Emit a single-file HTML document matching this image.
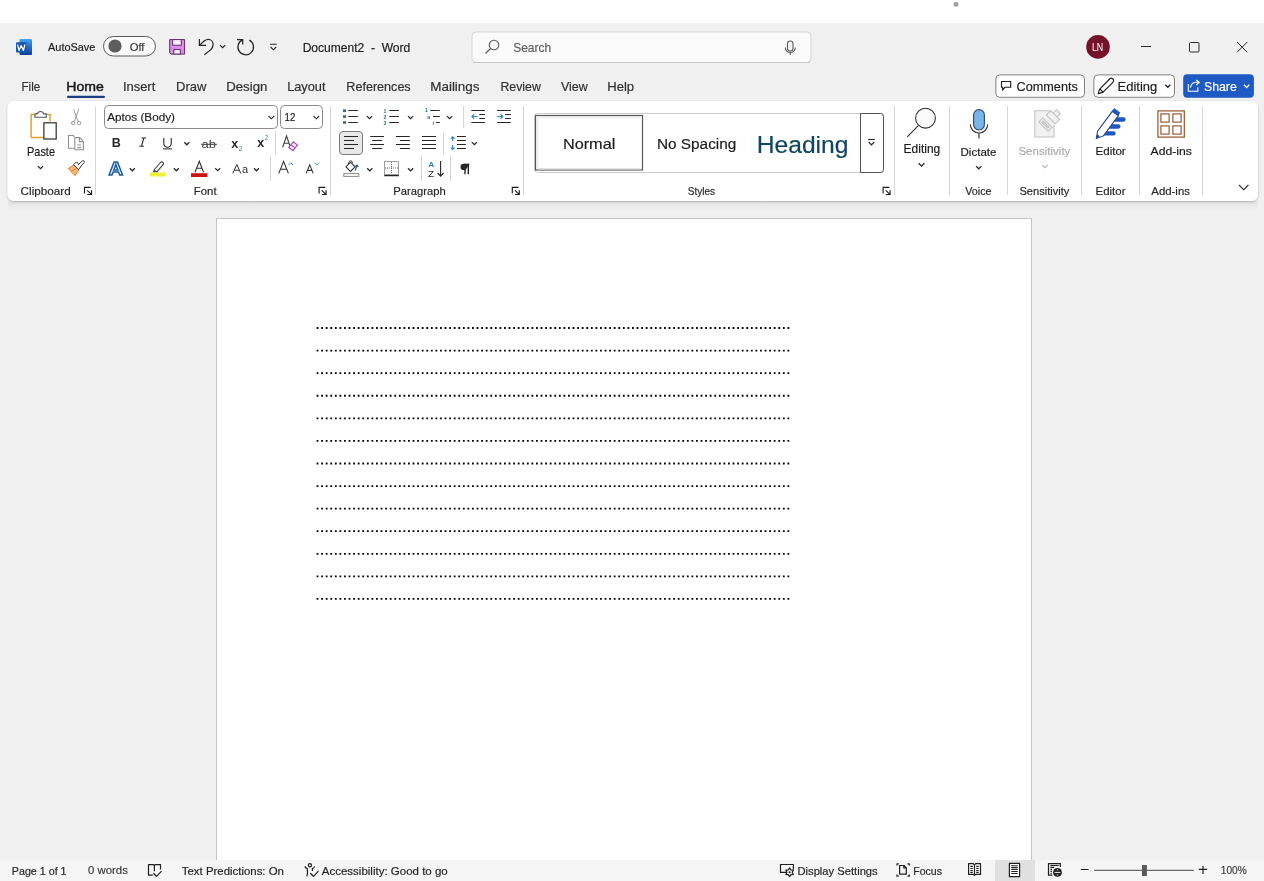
<!DOCTYPE html>
<html><head><meta charset="utf-8"><style>
html,body{margin:0;padding:0;background:#f0f0f0;overflow:hidden}
svg{display:block;font-family:"Liberation Sans", sans-serif;will-change:transform}
</style></head><body>
<svg width="1264" height="881" viewBox="0 0 1264 881">
<defs>
  <filter id="rshadow" x="-5%" y="-20%" width="110%" height="150%">
    <feGaussianBlur in="SourceAlpha" stdDeviation="1"/>
    <feOffset dy="1" result="b"/>
    <feComponentTransfer><feFuncA type="linear" slope="0.25"/></feComponentTransfer>
    <feMerge><feMergeNode/><feMergeNode in="SourceGraphic"/></feMerge>
  </filter>
</defs>
<!-- backgrounds -->
<rect x="0" y="0" width="1264" height="23" fill="#ffffff"/>
<circle cx="956" cy="4.2" r="2.5" fill="#a0a0a0"/>
<rect x="0" y="23" width="1264" height="837" fill="#f0f0f0"/>
<rect x="0" y="20" width="1264" height="1.5" fill="#fbfbfb"/>
<!-- ribbon card -->
<defs><linearGradient id="shg" x1="0" y1="0" x2="0" y2="1"><stop offset="0" stop-color="#000" stop-opacity="0.05"/><stop offset="1" stop-color="#000" stop-opacity="0"/></linearGradient></defs>
<rect x="8" y="201" width="1250" height="10" fill="url(#shg)"/>
<rect x="7.5" y="101" width="1250.5" height="100" rx="6.5" fill="#ffffff" filter="url(#rshadow)"/>
<!-- page -->
<rect x="216.5" y="218.5" width="815" height="700" fill="#ffffff" stroke="#c4c4c4" stroke-width="1"/>
<!-- status bar -->
<rect x="0" y="860" width="1264" height="21" fill="#f5f5f5"/>
<rect x="995" y="860" width="40" height="21" fill="#e0e0e0"/>

<!-- word logo -->
<defs><linearGradient id="wg" x1="0" y1="0" x2="0" y2="1">
<stop offset="0" stop-color="#41a5ee"/><stop offset="0.35" stop-color="#2b7cd3"/><stop offset="0.7" stop-color="#185abd"/><stop offset="1" stop-color="#103f91"/></linearGradient></defs>
<rect x="19.5" y="39" width="12.5" height="16" rx="1" fill="url(#wg)"/>
<rect x="16" y="42.2" width="10.4" height="10.4" rx="1" fill="#1a56b0"/>
<path d="M17.5 44.5 L19 50.4 L21.2 45.6 L23.4 50.4 L24.9 44.5" stroke="#ffffff" stroke-width="1.25" fill="none" stroke-linejoin="round"/>

<!-- autosave toggle -->
<rect x="103.5" y="36.5" width="52" height="19.5" rx="9.75" fill="#fafafa" stroke="#5a5a5a" stroke-width="1"/>
<circle cx="115" cy="46" r="6.6" fill="#5e5e5e"/>

<!-- save icon -->
<path d="M169.7 39.6 H184.6 V54.1 H171.2 L169.7 52.6 Z" fill="#dc8ce4" stroke="#5e2a66" stroke-width="1"/>
<rect x="172.7" y="39.6" width="8.6" height="5.6" fill="#fdf2fe" stroke="#5e2a66" stroke-width="1"/>
<rect x="173.8" y="49.6" width="6.5" height="4.5" fill="#fdf2fe" stroke="#5e2a66" stroke-width="1"/>

<!-- undo -->
<path d="M199.4 39 V45.4 H206" stroke="#262626" stroke-width="1.25" fill="none"/>
<path d="M199.6 45.2 C203 41.5 205.5 39.4 208.2 39.4 C211 39.4 213.1 41.6 213.1 44.5 C213.1 46.8 212.2 48.3 210.6 49.9 L204.3 54.8" stroke="#262626" stroke-width="1.25" fill="none"/>
<path d="M219.9 45.1 l2.7 2.6 l2.6 -2.6" stroke="#262626" stroke-width="1.3" fill="none"/>
<!-- redo -->
<path d="M237 39.6 H242.7 V44.6" stroke="#262626" stroke-width="1.25" fill="none"/>
<path d="M242.4 39.9 A7.8 7.8 0 1 0 249.4 40.1" stroke="#262626" stroke-width="1.25" fill="none"/>
<!-- customize -->
<path d="M270 44.3 h6.8 M270.6 47 l2.8 2.8 l2.8 -2.8" stroke="#262626" stroke-width="1.1" fill="none"/>

<!-- search box -->
<rect x="472" y="32" width="339" height="30.5" rx="4" fill="#fafafa" stroke="#d4d4d4" stroke-width="1"/>
<path d="M473 62.5 h337" stroke="#c8c8c8" stroke-width="1"/>
<circle cx="494" cy="45" r="4.8" fill="none" stroke="#5a5a5a" stroke-width="1.1"/>
<path d="M490.5 48.5 L485.5 53.5" stroke="#5a5a5a" stroke-width="1.1"/>
<!-- mic -->
<rect x="787.5" y="41" width="5.5" height="10" rx="2.75" fill="none" stroke="#5a5a5a" stroke-width="1.1"/>
<path d="M785.3 47.5 A5 5 0 0 0 795.3 47.5 M790.3 52.5 v2.5" fill="none" stroke="#5a5a5a" stroke-width="1.1"/>

<!-- avatar -->
<circle cx="1098" cy="46.9" r="11.8" fill="#761227"/>
<text x="1091.9" y="50.9" font-size="10.5" fill="#ffffff" textLength="11.4" lengthAdjust="spacingAndGlyphs">LN</text>
<!-- window controls -->
<path d="M1141 46.5 h10" stroke="#2b2b2b" stroke-width="1"/>
<rect x="1189.5" y="42.5" width="9.5" height="9.5" rx="1" fill="none" stroke="#2b2b2b" stroke-width="1"/>
<path d="M1237 42 L1247.3 52.3 M1247.3 42 L1237 52.3" stroke="#2b2b2b" stroke-width="1"/>

<!-- tab underline -->
<rect x="67" y="95.8" width="38" height="2.3" rx="1.1" fill="#1c3d80"/>

<!-- comments/editing/share buttons -->
<rect x="995.9" y="74.9" width="88.6" height="22.4" rx="4" fill="#ffffff" stroke="#808080" stroke-width="1"/>
<path d="M1001.5 81.5 H1010.7 V87.2 H1005 L1002.6 90.2 V87.2 H1001.5 Z" fill="none" stroke="#1e1e1e" stroke-width="1.15" stroke-linejoin="round"/>
<rect x="1093.9" y="74.9" width="80.6" height="22.4" rx="4" fill="#ffffff" stroke="#808080" stroke-width="1"/>
<path d="M1098.2 93.6 L1099.5 89.3 L1109.6 79 a2.3 2.3 0 0 1 3.3 3.3 L1102.8 92.4 Z M1099.9 89 L1103 92.1" fill="none" stroke="#1e1e1e" stroke-width="1.15" stroke-linejoin="round"/>
<path d="M1165.3 84.8 l2.5 2.5 l2.5 -2.5" fill="none" stroke="#1e1e1e" stroke-width="1.3"/>
<rect x="1183.2" y="74.2" width="70.7" height="23.6" rx="4" fill="#1d5ac4"/>
<path d="M1188.3 84.1 V91.3 H1197.8 V87.3" fill="none" stroke="#ffffff" stroke-width="1.1"/>
<path d="M1190.5 87.6 C1191 84 1193 82.3 1196.5 82.3 H1198.8 M1196.2 80 L1199.4 82.4 L1196.2 85" fill="none" stroke="#ffffff" stroke-width="1.1" stroke-linejoin="round"/>
<path d="M1243.9 84.8 l2.7 2.7 l2.7 -2.7" fill="none" stroke="#ffffff" stroke-width="1.3"/>

<!-- ribbon separators -->
<g stroke="#d6d6d6" stroke-width="1">
<path d="M95.5 107 v88"/>
<path d="M330.5 106 v89"/>
<path d="M523.5 106 v89"/>
<path d="M894.5 106 v89"/>
<path d="M949.5 106 v89"/>
<path d="M1007.5 106 v89"/>
<path d="M1081.5 106 v89"/>
<path d="M1139.5 106 v89"/>
<path d="M1202.5 106 v89"/>
<path d="M275.5 131 v24"/>
<path d="M270.5 156 v25"/>
<path d="M463.5 106 v22"/>
<path d="M443.5 132 v23"/>
<path d="M421.5 156 v25"/>
<path d="M450.5 156 v25"/>
</g>

<!-- paste icon -->
<path d="M43.4 137.4 H31.2 V114.6 H34.4 M46.8 114.6 H50 V121.6" fill="#fffaf0" stroke="#e3a12f" stroke-width="1.6"/>
<path d="M31.9 115.4 H49.2 V121.6 H43.4 V136.6 H31.9 Z" fill="#fffdf8"/>
<path d="M34.9 113.9 H37.4 A3.2 3.2 0 0 1 43.6 113.9 H46.3 V117.3 H34.9 Z" fill="#ffffff" stroke="#555555" stroke-width="1.1"/>
<rect x="43.9" y="122.8" width="12.3" height="16.2" fill="#ffffff" stroke="#333333" stroke-width="1.25"/>
<path d="M37.9 166.1 l2.6 2.6 l2.6 -2.6" fill="none" stroke="#262626" stroke-width="1.3"/>
<!-- cut (disabled) -->
<g fill="none" stroke="#9a9a9a" stroke-width="1">
<path d="M73.6 109.4 L78 121.3 M78.7 109.4 L74.3 121.3"/>
<circle cx="73.2" cy="123" r="1.7"/><circle cx="79.1" cy="123" r="1.7"/>
</g>
<!-- copy (disabled) -->
<g fill="none" stroke="#8e8e8e" stroke-width="1.05">
<path d="M74.2 148.3 H68.5 V135.5 H73.2 L74.6 136.9"/>
<path d="M74.8 137.6 H79.6 L83.4 141.4 V149.7 H74.8 Z M79.4 137.8 V141.6 H83.2 M77.2 145 H81 M77.2 147.6 H81"/>
</g>
<!-- format painter -->
<path d="M68.3 168.6 L74.2 164.8 L78.8 169.9 L75 175.6 Z" fill="#f6b779" stroke="#e07a2c" stroke-width="1"/>
<path d="M71.5 171 L76.5 168.5" stroke="#e07a2c" stroke-width="0.8"/>
<path d="M73.6 164.6 L76.4 161.8 L81 166.6 L78.4 169.6 Z" fill="#e9f6f8" stroke="#404040" stroke-width="1"/>
<path d="M78.2 164.8 L82.2 161 a1.2 1.2 0 0 1 1.9 1.7 L80.3 166.8" fill="#ffffff" stroke="#404040" stroke-width="1"/>

<!-- dialog launchers -->
<g fill="none" stroke="#1e1e1e" stroke-width="1.15">
<path id="dl" d="M84.5 193.6 V187.4 H90.8 M87.2 190.4 L91.1 194.1 M91.5 190.2 V194.5 H87.2"/>
<path transform="translate(234.6 0)" d="M84.5 193.6 V187.4 H90.8 M87.2 190.4 L91.1 194.1 M91.5 190.2 V194.5 H87.2"/>
<path transform="translate(427.8 0)" d="M84.5 193.6 V187.4 H90.8 M87.2 190.4 L91.1 194.1 M91.5 190.2 V194.5 H87.2"/>
<path transform="translate(798.6 0)" d="M84.5 193.6 V187.4 H90.8 M87.2 190.4 L91.1 194.1 M91.5 190.2 V194.5 H87.2"/>
</g>

<!-- font name / size boxes -->
<rect x="104.5" y="105.5" width="173" height="23" rx="4" fill="#ffffff" stroke="#8a8a8a" stroke-width="1"/>
<rect x="280.5" y="105.5" width="42" height="23" rx="4" fill="#ffffff" stroke="#8a8a8a" stroke-width="1"/>
<path d="M268.5 116 l2.8 2.8 l2.8 -2.8 M313.5 116 l2.8 2.8 l2.8 -2.8" fill="none" stroke="#303030" stroke-width="1.1"/>

<!-- B I U -->
<text x="111.8" y="146.6" font-size="12.5" font-weight="bold" fill="#262626">B</text>
<path d="M141.5 138 h4.5 M139.3 146.3 h4.5 M143.8 138 L141.5 146.3" fill="none" stroke="#262626" stroke-width="1.1"/>
<path d="M163.8 138 v5.5 a3.7 3.7 0 0 0 7.4 0 v-5.5" fill="none" stroke="#262626" stroke-width="1.1"/>
<path d="M163 148.9 h9" stroke="#262626" stroke-width="1"/>
<g fill="none" stroke="#262626" stroke-width="1.3">
<path d="M184.3 142.3 l2.5 2.5 l2.5 -2.5"/>
<path d="M129.8 168.3 l2.5 2.5 l2.5 -2.5"/>
<path d="M173.8 168.3 l2.5 2.5 l2.5 -2.5"/>
<path d="M215.2 168.1 l2.5 2.5 l2.5 -2.5"/>
<path d="M254 168.3 l2.5 2.5 l2.5 -2.5"/>
</g>
<text x="201.5" y="147.6" font-size="11.5" fill="#404040" textLength="14.5" lengthAdjust="spacingAndGlyphs">ab</text>
<path d="M201 144.3 h16" stroke="#404040" stroke-width="1"/>
<text x="231.3" y="147.6" font-size="12.5" font-weight="bold" fill="#262626">x</text>
<text x="238.8" y="150.6" font-size="6.5" fill="#2f8fa8">2</text>
<text x="257.3" y="147.3" font-size="12.5" font-weight="bold" fill="#262626">x</text>
<text x="264.7" y="140" font-size="6.5" fill="#2f8fa8">2</text>
<!-- clear formatting -->
<path d="M282.6 147.5 L286.5 136 L290.5 147.5 M284 143.3 h5" fill="none" stroke="#404040" stroke-width="1.1"/>
<path d="M288.8 147.3 l4.6 -5.5 l4 3.3 l-4.6 5.5 z" fill="#ffffff" stroke="#b04cc0" stroke-width="1.3"/>
<path d="M291 144.7 l3.8 3.1" stroke="#b04cc0" stroke-width="1.1"/>

<!-- text effects A -->
<text x="108.6" y="175.1" font-size="19" font-weight="bold" fill="#dceefc" stroke="#1c5a9e" stroke-width="1.4" textLength="14.6" lengthAdjust="spacingAndGlyphs">A</text>
<!-- highlighter -->
<path d="M154 170 l6.5 -7.5 a1.6 1.6 0 0 1 2.6 2.2 l-6.5 7.5 z" fill="#ffffff" stroke="#404040" stroke-width="1.1"/>
<path d="M154 170 l-1.5 2.4 l3 -0.2 z" fill="#404040"/>
<rect x="149.8" y="172.6" width="16" height="4" rx="1" fill="#eef03a"/>
<!-- font color -->
<path d="M195 172.2 L199.3 161.3 L203.6 172.2 M196.6 168.2 h5.4" fill="none" stroke="#303030" stroke-width="1.1"/>
<rect x="191" y="173.2" width="16.4" height="3.8" fill="#cc1414"/>
<!-- Aa -->
<path d="M232.8 173.4 L236.8 164.5 L240.8 173.4 M234.3 170.2 h5" fill="none" stroke="#303030" stroke-width="1"/>
<text x="242" y="173.4" font-size="11" fill="#303030">a</text>
<!-- grow/shrink -->
<path d="M278.8 173.4 L283.6 161.4 L288.4 173.4 M280.5 169.2 h6.2" fill="none" stroke="#303030" stroke-width="1.1"/>
<path d="M288.5 165 l2.3 -2.3 l2.3 2.3" fill="none" stroke="#2f8fa8" stroke-width="1"/>
<path d="M306.2 173.4 L309.7 164.9 L313.2 173.4 M307.4 170.4 h4.6" fill="none" stroke="#303030" stroke-width="1.1"/>
<path d="M314.5 162.7 l2.3 2.3 l2.3 -2.3" fill="none" stroke="#2f8fa8" stroke-width="1"/>

<!-- paragraph: bullets -->
<g fill="#2d6e85">
<rect x="343" y="109.4" width="3" height="2.6"/><rect x="343" y="115.3" width="3" height="2.6"/><rect x="343" y="121.2" width="3" height="2.6"/>
</g>
<g stroke="#262626" stroke-width="1" fill="none">
<path d="M348.3 110.5 h9.5 M348.3 116.5 h9.5 M348.3 122.5 h9.5"/>
<path d="M389.3 110.5 h9.6 M389.3 116.5 h9.6 M389.3 122.5 h9.6"/>
<path d="M430.3 110.5 h9.5 M433 116.5 h6.8 M436.2 122.5 h3.6"/>
<path d="M471.3 110.5 h13.6 M479.3 114.5 h5.6 M479.3 118.5 h5.6 M471.3 122.5 h13.6"/>
<path d="M497.1 110.5 h13.7 M505 114.5 h5.8 M505 118.5 h5.8 M497.1 122.5 h13.7"/>
</g>
<g fill="none" stroke="#262626" stroke-width="1.3">
<path d="M366.9 116.1 l2.6 2.6 l2.6 -2.6"/>
<path d="M408 116.1 l2.6 2.6 l2.6 -2.6"/>
<path d="M447 116.1 l2.6 2.6 l2.6 -2.6"/>
<path d="M471.8 142.1 l2.6 2.6 l2.6 -2.6"/>
<path d="M367.2 168.3 l2.6 2.6 l2.6 -2.6"/>
<path d="M408 168.3 l2.6 2.6 l2.6 -2.6"/>
</g>
<g fill="#2d6e85" font-size="5.2" font-weight="bold">
<text x="383.6" y="112.5">1</text><text x="383.6" y="118.5">2</text><text x="383.6" y="124.6">3</text>
<text x="425" y="112.4">1</text><text x="427.3" y="118.6">a</text><text x="432.6" y="124.7">i</text>
</g>
<path d="M477.5 116.5 h-5.5 M474.2 114.2 l-2.3 2.3 l2.3 2.3" fill="none" stroke="#2f86b8" stroke-width="1.1"/>
<path d="M497.2 116.5 h5.5 M500.5 114.2 l2.3 2.3 l-2.3 2.3" fill="none" stroke="#2f86b8" stroke-width="1.1"/>
<!-- align left active -->
<rect x="339.5" y="131.5" width="23" height="23" rx="3.5" fill="#e8e8e8" stroke="#7a7a7a" stroke-width="1"/>
<g stroke="#262626" stroke-width="1" fill="none">
<path d="M344 136.5 h14 M344 140.5 h10 M344 144.5 h14 M344 148.5 h10"/>
<path d="M370.2 136.5 h13.8 M372.2 140.5 h9.8 M370.2 144.5 h13.8 M372.2 148.5 h9.8"/>
<path d="M396 136.5 h13.8 M400 140.5 h9.8 M396 144.5 h13.8 M400 148.5 h9.8"/>
<path d="M422 136.5 h13.9 M422 140.5 h13.9 M422 144.5 h13.9 M422 148.5 h13.9"/>
<path d="M457 136.5 h8.9 M457 140.5 h8.9 M457 144.5 h8.9 M457 148.5 h8.9"/>
</g>
<path d="M452.7 137 v4 M450.8 138.8 l1.9 -1.9 l1.9 1.9 M452.7 145 v4.5 M450.8 147.6 l1.9 1.9 l1.9 -1.9" fill="none" stroke="#2f86b8" stroke-width="1.1"/>
<!-- shading -->
<path d="M345.9 166.8 l4.6 -4.6 l4.6 4.6 l-4.6 4.6 z" fill="#ffffff" stroke="#303030" stroke-width="1.1"/>
<path d="M348.5 164.2 c0 -2.5 1 -3.3 2.2 -3.3 c1.2 0 1.8 0.8 1.8 2.4" fill="none" stroke="#303030" stroke-width="1"/>
<path d="M355.2 170.5 c0.5 -2 0.8 -3.2 1.8 -4.8 M355.3 166.3 l1.8 -1.2 l0.9 2" fill="none" stroke="#1f5f9f" stroke-width="1.2"/>
<rect x="343.8" y="173.6" width="15" height="2.8" fill="#ffffff" stroke="#8a8a8a" stroke-width="1"/>
<!-- borders -->
<rect x="384.5" y="161.5" width="14" height="13" fill="none" stroke="#404040" stroke-width="1" stroke-dasharray="1 1"/>
<path d="M391.5 162 v12 M385 168 h13" stroke="#606060" stroke-width="1" stroke-dasharray="1 1"/>
<path d="M384.2 175.6 h14.7" stroke="#262626" stroke-width="1.3"/>
<!-- sort -->
<text x="428.2" y="167.2" font-size="8" font-weight="bold" fill="#2f86b8" textLength="6" lengthAdjust="spacingAndGlyphs">A</text>
<text x="428" y="176.6" font-size="8.4" fill="#262626" textLength="6" lengthAdjust="spacingAndGlyphs">Z</text>
<path d="M440.6 161 v15 M437.6 173 l3 3.2 l3 -3.2" fill="none" stroke="#262626" stroke-width="1.1"/>
<!-- pilcrow -->
<path d="M465 163.8 v10.5 M468.3 163.8 v10.5" stroke="#262626" stroke-width="1.4"/>
<path d="M469.8 163.8 H463.6 a3.1 3.1 0 0 0 0 6.2 H465.5 Z" fill="#262626"/>

<!-- styles gallery -->
<rect x="534.5" y="113.5" width="349" height="59" rx="3" fill="#ffffff" stroke="#cacaca" stroke-width="1"/>
<rect x="535.5" y="115.5" width="107" height="54.5" fill="#ffffff" stroke="#585858" stroke-width="1.2"/>
<path d="M537.3 168.5 V117.3 H641" fill="none" stroke="#ececec" stroke-width="2"/>
<path d="M538 168.8 H641" fill="none" stroke="#e4e4e4" stroke-width="1.4"/>
<path d="M860.5 113.5 H880.5 a3 3 0 0 1 3 3 V169.5 a3 3 0 0 1 -3 3 H860.5 Z" fill="#ffffff" stroke="#505050" stroke-width="1"/>
<path d="M868.1 139.5 h6.7 M868.7 142 l2.75 2.8 l2.75 -2.8" fill="none" stroke="#262626" stroke-width="1.2"/>

<!-- editing search big -->
<circle cx="925.5" cy="118.2" r="9.9" fill="#fafafa" stroke="#303030" stroke-width="1.1"/>
<path d="M918.5 125.3 L907.3 136.8" stroke="#303030" stroke-width="1.1"/>
<path d="M918.6 163.2 l2.9 2.9 l2.9 -2.9" fill="none" stroke="#262626" stroke-width="1.3"/>
<!-- dictate mic -->
<rect x="973.6" y="109.6" width="10.8" height="20.4" rx="5.4" fill="#7ab5ea" stroke="#2c4a66" stroke-width="1.1"/>
<path d="M970.3 124.3 a8.6 8.6 0 0 0 17.4 0" fill="none" stroke="#404040" stroke-width="1.2"/>
<path d="M979 133 v5.6" stroke="#404040" stroke-width="1.3"/>
<path d="M976 166.1 l2.7 2.7 l2.7 -2.7" fill="none" stroke="#262626" stroke-width="1.3"/>
<!-- sensitivity (disabled) -->
<path d="M1050 110.8 H1034.8 V137 H1054 V125" fill="#f1f1f1" stroke="#c4c4c4" stroke-width="1.1"/>
<g transform="translate(1049.3 120.8) rotate(45)" fill="#f1f1f1" stroke="#c4c4c4" stroke-width="1.1">
<rect x="-2.8" y="-12.8" width="5.6" height="4.6"/>
<rect x="-6.2" y="-8.2" width="12.4" height="6.2"/>
<rect x="-6.6" y="2.6" width="13.2" height="5.6"/>
<rect x="-4.2" y="4.5" width="8.4" height="1.8" fill="#d4d4d4"/>
</g>
<path d="M1042.2 165 l2.7 2.7 l2.7 -2.7" fill="none" stroke="#b8b8b8" stroke-width="1.2"/>
<!-- editor icon -->
<g fill="none" stroke="#1f56c0" stroke-width="4.3" stroke-linecap="round">
<path d="M1113 119.5 H1123.5 M1108 126.5 H1118.4 M1102.5 133.4 H1113.5"/>
</g>
<path d="M1096.3 138.5 L1097.6 131.2 L1112.3 111.3 L1118.4 115.7 L1103.4 135.9 Z" fill="#ffffff" stroke="#23408a" stroke-width="1.1"/>
<path d="M1112.3 111.3 L1114.3 108.7 L1119.5 112.5 L1118.4 115.7 Z" fill="#1f56c0" stroke="#1f56c0" stroke-width="1"/>
<path d="M1096.3 138.5 L1097.3 134.3 L1099.8 136.2 Z" fill="#23408a"/>
<!-- add-ins -->
<rect x="1157.9" y="110.9" width="26.4" height="26.2" fill="#ffffff" stroke="#96522e" stroke-width="1.2"/>
<g fill="none" stroke="#96522e" stroke-width="1.15">
<rect x="1160.9" y="113.9" width="8.2" height="8.2"/><rect x="1172.9" y="113.9" width="8.2" height="8.2"/>
<rect x="1160.9" y="125.9" width="8.2" height="8.2"/><rect x="1172.9" y="125.9" width="8.2" height="8.2"/>
</g>
<!-- collapse ribbon -->
<path d="M1239 185 l4.7 4.7 l4.7 -4.7" fill="none" stroke="#303030" stroke-width="1.1"/>

<!-- status bar icons -->
<g fill="none" stroke="#1e1e1e" stroke-width="1.2" stroke-linejoin="round">
<path d="M152.8 875.2 H148.5 V864.6 H153.3 Q154.4 864.6 154.4 866 V871.3 M154.4 866 Q154.4 864.6 155.7 864.6 H160.5 V869.5"/>
<path d="M153.4 873.3 L156.5 876.3 L161.6 871.2"/>
<circle cx="309.9" cy="865.2" r="1.6"/>
<path d="M304.8 866.4 Q305.8 868.3 307.3 868.6 L307.5 873 Q307.1 876 306.8 876.4 M314.6 866.4 Q314 868.3 312.4 868.6 V871"/>
<path d="M310.3 873.3 L313.5 876.3 L318.5 871.2"/>
<path d="M787.5 872.4 H780.5 V864.5 H793.4 V869.5"/>
<path d="M897 865.6 V863.8 H898.8 M907.5 863.8 H909.3 V865.6 M897 874.4 V876.2 H898.8 M909.3 874.4 V876.2 H907.5"/>
<path d="M899.6 865.5 H904 L906.3 867.8 V874.2 H899.6 Z M903.8 865.7 V868 H906.1"/>
<path d="M968.6 863.6 H973.3 L974.5 864.8 L975.7 863.6 H980.5 V874.4 H975.7 L974.5 875.4 L973.3 874.4 H968.6 Z M974.5 864.8 V875.4" fill="#ffffff"/>
<path d="M1009.4 863.4 H1019.6 V876.6 H1009.4 Z" fill="#ffffff"/>
<path d="M1052.3 875.2 H1048.5 V863.6 H1060.4 V867"/>
</g>
<g stroke="#1e1e1e" stroke-width="1.1" fill="none">
<path d="M970.3 866.4 h2.5 M970.3 868.5 h2.5 M970.3 870.5 h2.5 M970.3 872.4 h2.5 M976.2 866.4 h2.5 M976.2 868.5 h2.5 M976.2 870.5 h2.5 M976.2 872.4 h2.5"/>
<path d="M1011.2 865.7 h6.6 M1011.2 867.6 h6.6 M1011.2 869.5 h6.6 M1011.2 871.5 h6.6 M1011.2 873.5 h6.6"/>
<path d="M1050.4 865.5 h8.2 M1050.4 867.4 h3.8 M1050.4 869.4 h1.6 M1050.4 871.4 h1.6 M1050.4 873.3 h1.6"/>
</g>
<!-- gear -->
<g transform="translate(789.6 872.3)">
<path d="M0 -4.4 L1.3 -2.3 L3.8 -2.2 L2.6 0 L3.8 2.2 L1.3 2.3 L0 4.4 L-1.3 2.3 L-3.8 2.2 L-2.6 0 L-3.8 -2.2 L-1.3 -2.3 Z" fill="#f5f5f5" stroke="#1e1e1e" stroke-width="1.15" stroke-linejoin="round"/>
<circle r="1" fill="#1e1e1e"/>
</g>
<!-- globe -->
<circle cx="1057.5" cy="872.4" r="4.4" fill="#1e1e1e"/>
<path d="M1054.6 872.4 h5.8" stroke="#f5f5f5" stroke-width="1"/>
<path d="M1056.5 870.3 l1 -1.3 l1 1.3 z M1056.5 874.5 l1 1.3 l1 -1.3 z" fill="#f5f5f5"/>
<path d="M1080.8 869.5 h7.8 M1198.8 869.4 h8.3 M1203 865.9 v8.2" stroke="#1e1e1e" stroke-width="1.2"/>
<path d="M1094 870.4 h99.8" stroke="#6a6a6a" stroke-width="1.1"/>
<rect x="1142" y="865" width="4.9" height="11" fill="#5a5a5a"/>

<path d="M316.60 327.10h1.8v1.8h-1.8zM321.17 327.10h1.8v1.8h-1.8zM325.74 327.10h1.8v1.8h-1.8zM330.31 327.10h1.8v1.8h-1.8zM334.89 327.10h1.8v1.8h-1.8zM339.46 327.10h1.8v1.8h-1.8zM344.03 327.10h1.8v1.8h-1.8zM348.60 327.10h1.8v1.8h-1.8zM353.17 327.10h1.8v1.8h-1.8zM357.74 327.10h1.8v1.8h-1.8zM362.31 327.10h1.8v1.8h-1.8zM366.89 327.10h1.8v1.8h-1.8zM371.46 327.10h1.8v1.8h-1.8zM376.03 327.10h1.8v1.8h-1.8zM380.60 327.10h1.8v1.8h-1.8zM385.17 327.10h1.8v1.8h-1.8zM389.74 327.10h1.8v1.8h-1.8zM394.31 327.10h1.8v1.8h-1.8zM398.89 327.10h1.8v1.8h-1.8zM403.46 327.10h1.8v1.8h-1.8zM408.03 327.10h1.8v1.8h-1.8zM412.60 327.10h1.8v1.8h-1.8zM417.17 327.10h1.8v1.8h-1.8zM421.74 327.10h1.8v1.8h-1.8zM426.31 327.10h1.8v1.8h-1.8zM430.89 327.10h1.8v1.8h-1.8zM435.46 327.10h1.8v1.8h-1.8zM440.03 327.10h1.8v1.8h-1.8zM444.60 327.10h1.8v1.8h-1.8zM449.17 327.10h1.8v1.8h-1.8zM453.74 327.10h1.8v1.8h-1.8zM458.31 327.10h1.8v1.8h-1.8zM462.89 327.10h1.8v1.8h-1.8zM467.46 327.10h1.8v1.8h-1.8zM472.03 327.10h1.8v1.8h-1.8zM476.60 327.10h1.8v1.8h-1.8zM481.17 327.10h1.8v1.8h-1.8zM485.74 327.10h1.8v1.8h-1.8zM490.31 327.10h1.8v1.8h-1.8zM494.89 327.10h1.8v1.8h-1.8zM499.46 327.10h1.8v1.8h-1.8zM504.03 327.10h1.8v1.8h-1.8zM508.60 327.10h1.8v1.8h-1.8zM513.17 327.10h1.8v1.8h-1.8zM517.74 327.10h1.8v1.8h-1.8zM522.31 327.10h1.8v1.8h-1.8zM526.89 327.10h1.8v1.8h-1.8zM531.46 327.10h1.8v1.8h-1.8zM536.03 327.10h1.8v1.8h-1.8zM540.60 327.10h1.8v1.8h-1.8zM545.17 327.10h1.8v1.8h-1.8zM549.74 327.10h1.8v1.8h-1.8zM554.31 327.10h1.8v1.8h-1.8zM558.89 327.10h1.8v1.8h-1.8zM563.46 327.10h1.8v1.8h-1.8zM568.03 327.10h1.8v1.8h-1.8zM572.60 327.10h1.8v1.8h-1.8zM577.17 327.10h1.8v1.8h-1.8zM581.74 327.10h1.8v1.8h-1.8zM586.31 327.10h1.8v1.8h-1.8zM590.89 327.10h1.8v1.8h-1.8zM595.46 327.10h1.8v1.8h-1.8zM600.03 327.10h1.8v1.8h-1.8zM604.60 327.10h1.8v1.8h-1.8zM609.17 327.10h1.8v1.8h-1.8zM613.74 327.10h1.8v1.8h-1.8zM618.31 327.10h1.8v1.8h-1.8zM622.89 327.10h1.8v1.8h-1.8zM627.46 327.10h1.8v1.8h-1.8zM632.03 327.10h1.8v1.8h-1.8zM636.60 327.10h1.8v1.8h-1.8zM641.17 327.10h1.8v1.8h-1.8zM645.74 327.10h1.8v1.8h-1.8zM650.31 327.10h1.8v1.8h-1.8zM654.89 327.10h1.8v1.8h-1.8zM659.46 327.10h1.8v1.8h-1.8zM664.03 327.10h1.8v1.8h-1.8zM668.60 327.10h1.8v1.8h-1.8zM673.17 327.10h1.8v1.8h-1.8zM677.74 327.10h1.8v1.8h-1.8zM682.31 327.10h1.8v1.8h-1.8zM686.89 327.10h1.8v1.8h-1.8zM691.46 327.10h1.8v1.8h-1.8zM696.03 327.10h1.8v1.8h-1.8zM700.60 327.10h1.8v1.8h-1.8zM705.17 327.10h1.8v1.8h-1.8zM709.74 327.10h1.8v1.8h-1.8zM714.31 327.10h1.8v1.8h-1.8zM718.89 327.10h1.8v1.8h-1.8zM723.46 327.10h1.8v1.8h-1.8zM728.03 327.10h1.8v1.8h-1.8zM732.60 327.10h1.8v1.8h-1.8zM737.17 327.10h1.8v1.8h-1.8zM741.74 327.10h1.8v1.8h-1.8zM746.31 327.10h1.8v1.8h-1.8zM750.89 327.10h1.8v1.8h-1.8zM755.46 327.10h1.8v1.8h-1.8zM760.03 327.10h1.8v1.8h-1.8zM764.60 327.10h1.8v1.8h-1.8zM769.17 327.10h1.8v1.8h-1.8zM773.74 327.10h1.8v1.8h-1.8zM778.31 327.10h1.8v1.8h-1.8zM782.89 327.10h1.8v1.8h-1.8zM787.46 327.10h1.8v1.8h-1.8zM316.60 349.68h1.8v1.8h-1.8zM321.17 349.68h1.8v1.8h-1.8zM325.74 349.68h1.8v1.8h-1.8zM330.31 349.68h1.8v1.8h-1.8zM334.89 349.68h1.8v1.8h-1.8zM339.46 349.68h1.8v1.8h-1.8zM344.03 349.68h1.8v1.8h-1.8zM348.60 349.68h1.8v1.8h-1.8zM353.17 349.68h1.8v1.8h-1.8zM357.74 349.68h1.8v1.8h-1.8zM362.31 349.68h1.8v1.8h-1.8zM366.89 349.68h1.8v1.8h-1.8zM371.46 349.68h1.8v1.8h-1.8zM376.03 349.68h1.8v1.8h-1.8zM380.60 349.68h1.8v1.8h-1.8zM385.17 349.68h1.8v1.8h-1.8zM389.74 349.68h1.8v1.8h-1.8zM394.31 349.68h1.8v1.8h-1.8zM398.89 349.68h1.8v1.8h-1.8zM403.46 349.68h1.8v1.8h-1.8zM408.03 349.68h1.8v1.8h-1.8zM412.60 349.68h1.8v1.8h-1.8zM417.17 349.68h1.8v1.8h-1.8zM421.74 349.68h1.8v1.8h-1.8zM426.31 349.68h1.8v1.8h-1.8zM430.89 349.68h1.8v1.8h-1.8zM435.46 349.68h1.8v1.8h-1.8zM440.03 349.68h1.8v1.8h-1.8zM444.60 349.68h1.8v1.8h-1.8zM449.17 349.68h1.8v1.8h-1.8zM453.74 349.68h1.8v1.8h-1.8zM458.31 349.68h1.8v1.8h-1.8zM462.89 349.68h1.8v1.8h-1.8zM467.46 349.68h1.8v1.8h-1.8zM472.03 349.68h1.8v1.8h-1.8zM476.60 349.68h1.8v1.8h-1.8zM481.17 349.68h1.8v1.8h-1.8zM485.74 349.68h1.8v1.8h-1.8zM490.31 349.68h1.8v1.8h-1.8zM494.89 349.68h1.8v1.8h-1.8zM499.46 349.68h1.8v1.8h-1.8zM504.03 349.68h1.8v1.8h-1.8zM508.60 349.68h1.8v1.8h-1.8zM513.17 349.68h1.8v1.8h-1.8zM517.74 349.68h1.8v1.8h-1.8zM522.31 349.68h1.8v1.8h-1.8zM526.89 349.68h1.8v1.8h-1.8zM531.46 349.68h1.8v1.8h-1.8zM536.03 349.68h1.8v1.8h-1.8zM540.60 349.68h1.8v1.8h-1.8zM545.17 349.68h1.8v1.8h-1.8zM549.74 349.68h1.8v1.8h-1.8zM554.31 349.68h1.8v1.8h-1.8zM558.89 349.68h1.8v1.8h-1.8zM563.46 349.68h1.8v1.8h-1.8zM568.03 349.68h1.8v1.8h-1.8zM572.60 349.68h1.8v1.8h-1.8zM577.17 349.68h1.8v1.8h-1.8zM581.74 349.68h1.8v1.8h-1.8zM586.31 349.68h1.8v1.8h-1.8zM590.89 349.68h1.8v1.8h-1.8zM595.46 349.68h1.8v1.8h-1.8zM600.03 349.68h1.8v1.8h-1.8zM604.60 349.68h1.8v1.8h-1.8zM609.17 349.68h1.8v1.8h-1.8zM613.74 349.68h1.8v1.8h-1.8zM618.31 349.68h1.8v1.8h-1.8zM622.89 349.68h1.8v1.8h-1.8zM627.46 349.68h1.8v1.8h-1.8zM632.03 349.68h1.8v1.8h-1.8zM636.60 349.68h1.8v1.8h-1.8zM641.17 349.68h1.8v1.8h-1.8zM645.74 349.68h1.8v1.8h-1.8zM650.31 349.68h1.8v1.8h-1.8zM654.89 349.68h1.8v1.8h-1.8zM659.46 349.68h1.8v1.8h-1.8zM664.03 349.68h1.8v1.8h-1.8zM668.60 349.68h1.8v1.8h-1.8zM673.17 349.68h1.8v1.8h-1.8zM677.74 349.68h1.8v1.8h-1.8zM682.31 349.68h1.8v1.8h-1.8zM686.89 349.68h1.8v1.8h-1.8zM691.46 349.68h1.8v1.8h-1.8zM696.03 349.68h1.8v1.8h-1.8zM700.60 349.68h1.8v1.8h-1.8zM705.17 349.68h1.8v1.8h-1.8zM709.74 349.68h1.8v1.8h-1.8zM714.31 349.68h1.8v1.8h-1.8zM718.89 349.68h1.8v1.8h-1.8zM723.46 349.68h1.8v1.8h-1.8zM728.03 349.68h1.8v1.8h-1.8zM732.60 349.68h1.8v1.8h-1.8zM737.17 349.68h1.8v1.8h-1.8zM741.74 349.68h1.8v1.8h-1.8zM746.31 349.68h1.8v1.8h-1.8zM750.89 349.68h1.8v1.8h-1.8zM755.46 349.68h1.8v1.8h-1.8zM760.03 349.68h1.8v1.8h-1.8zM764.60 349.68h1.8v1.8h-1.8zM769.17 349.68h1.8v1.8h-1.8zM773.74 349.68h1.8v1.8h-1.8zM778.31 349.68h1.8v1.8h-1.8zM782.89 349.68h1.8v1.8h-1.8zM787.46 349.68h1.8v1.8h-1.8zM316.60 372.26h1.8v1.8h-1.8zM321.17 372.26h1.8v1.8h-1.8zM325.74 372.26h1.8v1.8h-1.8zM330.31 372.26h1.8v1.8h-1.8zM334.89 372.26h1.8v1.8h-1.8zM339.46 372.26h1.8v1.8h-1.8zM344.03 372.26h1.8v1.8h-1.8zM348.60 372.26h1.8v1.8h-1.8zM353.17 372.26h1.8v1.8h-1.8zM357.74 372.26h1.8v1.8h-1.8zM362.31 372.26h1.8v1.8h-1.8zM366.89 372.26h1.8v1.8h-1.8zM371.46 372.26h1.8v1.8h-1.8zM376.03 372.26h1.8v1.8h-1.8zM380.60 372.26h1.8v1.8h-1.8zM385.17 372.26h1.8v1.8h-1.8zM389.74 372.26h1.8v1.8h-1.8zM394.31 372.26h1.8v1.8h-1.8zM398.89 372.26h1.8v1.8h-1.8zM403.46 372.26h1.8v1.8h-1.8zM408.03 372.26h1.8v1.8h-1.8zM412.60 372.26h1.8v1.8h-1.8zM417.17 372.26h1.8v1.8h-1.8zM421.74 372.26h1.8v1.8h-1.8zM426.31 372.26h1.8v1.8h-1.8zM430.89 372.26h1.8v1.8h-1.8zM435.46 372.26h1.8v1.8h-1.8zM440.03 372.26h1.8v1.8h-1.8zM444.60 372.26h1.8v1.8h-1.8zM449.17 372.26h1.8v1.8h-1.8zM453.74 372.26h1.8v1.8h-1.8zM458.31 372.26h1.8v1.8h-1.8zM462.89 372.26h1.8v1.8h-1.8zM467.46 372.26h1.8v1.8h-1.8zM472.03 372.26h1.8v1.8h-1.8zM476.60 372.26h1.8v1.8h-1.8zM481.17 372.26h1.8v1.8h-1.8zM485.74 372.26h1.8v1.8h-1.8zM490.31 372.26h1.8v1.8h-1.8zM494.89 372.26h1.8v1.8h-1.8zM499.46 372.26h1.8v1.8h-1.8zM504.03 372.26h1.8v1.8h-1.8zM508.60 372.26h1.8v1.8h-1.8zM513.17 372.26h1.8v1.8h-1.8zM517.74 372.26h1.8v1.8h-1.8zM522.31 372.26h1.8v1.8h-1.8zM526.89 372.26h1.8v1.8h-1.8zM531.46 372.26h1.8v1.8h-1.8zM536.03 372.26h1.8v1.8h-1.8zM540.60 372.26h1.8v1.8h-1.8zM545.17 372.26h1.8v1.8h-1.8zM549.74 372.26h1.8v1.8h-1.8zM554.31 372.26h1.8v1.8h-1.8zM558.89 372.26h1.8v1.8h-1.8zM563.46 372.26h1.8v1.8h-1.8zM568.03 372.26h1.8v1.8h-1.8zM572.60 372.26h1.8v1.8h-1.8zM577.17 372.26h1.8v1.8h-1.8zM581.74 372.26h1.8v1.8h-1.8zM586.31 372.26h1.8v1.8h-1.8zM590.89 372.26h1.8v1.8h-1.8zM595.46 372.26h1.8v1.8h-1.8zM600.03 372.26h1.8v1.8h-1.8zM604.60 372.26h1.8v1.8h-1.8zM609.17 372.26h1.8v1.8h-1.8zM613.74 372.26h1.8v1.8h-1.8zM618.31 372.26h1.8v1.8h-1.8zM622.89 372.26h1.8v1.8h-1.8zM627.46 372.26h1.8v1.8h-1.8zM632.03 372.26h1.8v1.8h-1.8zM636.60 372.26h1.8v1.8h-1.8zM641.17 372.26h1.8v1.8h-1.8zM645.74 372.26h1.8v1.8h-1.8zM650.31 372.26h1.8v1.8h-1.8zM654.89 372.26h1.8v1.8h-1.8zM659.46 372.26h1.8v1.8h-1.8zM664.03 372.26h1.8v1.8h-1.8zM668.60 372.26h1.8v1.8h-1.8zM673.17 372.26h1.8v1.8h-1.8zM677.74 372.26h1.8v1.8h-1.8zM682.31 372.26h1.8v1.8h-1.8zM686.89 372.26h1.8v1.8h-1.8zM691.46 372.26h1.8v1.8h-1.8zM696.03 372.26h1.8v1.8h-1.8zM700.60 372.26h1.8v1.8h-1.8zM705.17 372.26h1.8v1.8h-1.8zM709.74 372.26h1.8v1.8h-1.8zM714.31 372.26h1.8v1.8h-1.8zM718.89 372.26h1.8v1.8h-1.8zM723.46 372.26h1.8v1.8h-1.8zM728.03 372.26h1.8v1.8h-1.8zM732.60 372.26h1.8v1.8h-1.8zM737.17 372.26h1.8v1.8h-1.8zM741.74 372.26h1.8v1.8h-1.8zM746.31 372.26h1.8v1.8h-1.8zM750.89 372.26h1.8v1.8h-1.8zM755.46 372.26h1.8v1.8h-1.8zM760.03 372.26h1.8v1.8h-1.8zM764.60 372.26h1.8v1.8h-1.8zM769.17 372.26h1.8v1.8h-1.8zM773.74 372.26h1.8v1.8h-1.8zM778.31 372.26h1.8v1.8h-1.8zM782.89 372.26h1.8v1.8h-1.8zM787.46 372.26h1.8v1.8h-1.8zM316.60 394.84h1.8v1.8h-1.8zM321.17 394.84h1.8v1.8h-1.8zM325.74 394.84h1.8v1.8h-1.8zM330.31 394.84h1.8v1.8h-1.8zM334.89 394.84h1.8v1.8h-1.8zM339.46 394.84h1.8v1.8h-1.8zM344.03 394.84h1.8v1.8h-1.8zM348.60 394.84h1.8v1.8h-1.8zM353.17 394.84h1.8v1.8h-1.8zM357.74 394.84h1.8v1.8h-1.8zM362.31 394.84h1.8v1.8h-1.8zM366.89 394.84h1.8v1.8h-1.8zM371.46 394.84h1.8v1.8h-1.8zM376.03 394.84h1.8v1.8h-1.8zM380.60 394.84h1.8v1.8h-1.8zM385.17 394.84h1.8v1.8h-1.8zM389.74 394.84h1.8v1.8h-1.8zM394.31 394.84h1.8v1.8h-1.8zM398.89 394.84h1.8v1.8h-1.8zM403.46 394.84h1.8v1.8h-1.8zM408.03 394.84h1.8v1.8h-1.8zM412.60 394.84h1.8v1.8h-1.8zM417.17 394.84h1.8v1.8h-1.8zM421.74 394.84h1.8v1.8h-1.8zM426.31 394.84h1.8v1.8h-1.8zM430.89 394.84h1.8v1.8h-1.8zM435.46 394.84h1.8v1.8h-1.8zM440.03 394.84h1.8v1.8h-1.8zM444.60 394.84h1.8v1.8h-1.8zM449.17 394.84h1.8v1.8h-1.8zM453.74 394.84h1.8v1.8h-1.8zM458.31 394.84h1.8v1.8h-1.8zM462.89 394.84h1.8v1.8h-1.8zM467.46 394.84h1.8v1.8h-1.8zM472.03 394.84h1.8v1.8h-1.8zM476.60 394.84h1.8v1.8h-1.8zM481.17 394.84h1.8v1.8h-1.8zM485.74 394.84h1.8v1.8h-1.8zM490.31 394.84h1.8v1.8h-1.8zM494.89 394.84h1.8v1.8h-1.8zM499.46 394.84h1.8v1.8h-1.8zM504.03 394.84h1.8v1.8h-1.8zM508.60 394.84h1.8v1.8h-1.8zM513.17 394.84h1.8v1.8h-1.8zM517.74 394.84h1.8v1.8h-1.8zM522.31 394.84h1.8v1.8h-1.8zM526.89 394.84h1.8v1.8h-1.8zM531.46 394.84h1.8v1.8h-1.8zM536.03 394.84h1.8v1.8h-1.8zM540.60 394.84h1.8v1.8h-1.8zM545.17 394.84h1.8v1.8h-1.8zM549.74 394.84h1.8v1.8h-1.8zM554.31 394.84h1.8v1.8h-1.8zM558.89 394.84h1.8v1.8h-1.8zM563.46 394.84h1.8v1.8h-1.8zM568.03 394.84h1.8v1.8h-1.8zM572.60 394.84h1.8v1.8h-1.8zM577.17 394.84h1.8v1.8h-1.8zM581.74 394.84h1.8v1.8h-1.8zM586.31 394.84h1.8v1.8h-1.8zM590.89 394.84h1.8v1.8h-1.8zM595.46 394.84h1.8v1.8h-1.8zM600.03 394.84h1.8v1.8h-1.8zM604.60 394.84h1.8v1.8h-1.8zM609.17 394.84h1.8v1.8h-1.8zM613.74 394.84h1.8v1.8h-1.8zM618.31 394.84h1.8v1.8h-1.8zM622.89 394.84h1.8v1.8h-1.8zM627.46 394.84h1.8v1.8h-1.8zM632.03 394.84h1.8v1.8h-1.8zM636.60 394.84h1.8v1.8h-1.8zM641.17 394.84h1.8v1.8h-1.8zM645.74 394.84h1.8v1.8h-1.8zM650.31 394.84h1.8v1.8h-1.8zM654.89 394.84h1.8v1.8h-1.8zM659.46 394.84h1.8v1.8h-1.8zM664.03 394.84h1.8v1.8h-1.8zM668.60 394.84h1.8v1.8h-1.8zM673.17 394.84h1.8v1.8h-1.8zM677.74 394.84h1.8v1.8h-1.8zM682.31 394.84h1.8v1.8h-1.8zM686.89 394.84h1.8v1.8h-1.8zM691.46 394.84h1.8v1.8h-1.8zM696.03 394.84h1.8v1.8h-1.8zM700.60 394.84h1.8v1.8h-1.8zM705.17 394.84h1.8v1.8h-1.8zM709.74 394.84h1.8v1.8h-1.8zM714.31 394.84h1.8v1.8h-1.8zM718.89 394.84h1.8v1.8h-1.8zM723.46 394.84h1.8v1.8h-1.8zM728.03 394.84h1.8v1.8h-1.8zM732.60 394.84h1.8v1.8h-1.8zM737.17 394.84h1.8v1.8h-1.8zM741.74 394.84h1.8v1.8h-1.8zM746.31 394.84h1.8v1.8h-1.8zM750.89 394.84h1.8v1.8h-1.8zM755.46 394.84h1.8v1.8h-1.8zM760.03 394.84h1.8v1.8h-1.8zM764.60 394.84h1.8v1.8h-1.8zM769.17 394.84h1.8v1.8h-1.8zM773.74 394.84h1.8v1.8h-1.8zM778.31 394.84h1.8v1.8h-1.8zM782.89 394.84h1.8v1.8h-1.8zM787.46 394.84h1.8v1.8h-1.8zM316.60 417.42h1.8v1.8h-1.8zM321.17 417.42h1.8v1.8h-1.8zM325.74 417.42h1.8v1.8h-1.8zM330.31 417.42h1.8v1.8h-1.8zM334.89 417.42h1.8v1.8h-1.8zM339.46 417.42h1.8v1.8h-1.8zM344.03 417.42h1.8v1.8h-1.8zM348.60 417.42h1.8v1.8h-1.8zM353.17 417.42h1.8v1.8h-1.8zM357.74 417.42h1.8v1.8h-1.8zM362.31 417.42h1.8v1.8h-1.8zM366.89 417.42h1.8v1.8h-1.8zM371.46 417.42h1.8v1.8h-1.8zM376.03 417.42h1.8v1.8h-1.8zM380.60 417.42h1.8v1.8h-1.8zM385.17 417.42h1.8v1.8h-1.8zM389.74 417.42h1.8v1.8h-1.8zM394.31 417.42h1.8v1.8h-1.8zM398.89 417.42h1.8v1.8h-1.8zM403.46 417.42h1.8v1.8h-1.8zM408.03 417.42h1.8v1.8h-1.8zM412.60 417.42h1.8v1.8h-1.8zM417.17 417.42h1.8v1.8h-1.8zM421.74 417.42h1.8v1.8h-1.8zM426.31 417.42h1.8v1.8h-1.8zM430.89 417.42h1.8v1.8h-1.8zM435.46 417.42h1.8v1.8h-1.8zM440.03 417.42h1.8v1.8h-1.8zM444.60 417.42h1.8v1.8h-1.8zM449.17 417.42h1.8v1.8h-1.8zM453.74 417.42h1.8v1.8h-1.8zM458.31 417.42h1.8v1.8h-1.8zM462.89 417.42h1.8v1.8h-1.8zM467.46 417.42h1.8v1.8h-1.8zM472.03 417.42h1.8v1.8h-1.8zM476.60 417.42h1.8v1.8h-1.8zM481.17 417.42h1.8v1.8h-1.8zM485.74 417.42h1.8v1.8h-1.8zM490.31 417.42h1.8v1.8h-1.8zM494.89 417.42h1.8v1.8h-1.8zM499.46 417.42h1.8v1.8h-1.8zM504.03 417.42h1.8v1.8h-1.8zM508.60 417.42h1.8v1.8h-1.8zM513.17 417.42h1.8v1.8h-1.8zM517.74 417.42h1.8v1.8h-1.8zM522.31 417.42h1.8v1.8h-1.8zM526.89 417.42h1.8v1.8h-1.8zM531.46 417.42h1.8v1.8h-1.8zM536.03 417.42h1.8v1.8h-1.8zM540.60 417.42h1.8v1.8h-1.8zM545.17 417.42h1.8v1.8h-1.8zM549.74 417.42h1.8v1.8h-1.8zM554.31 417.42h1.8v1.8h-1.8zM558.89 417.42h1.8v1.8h-1.8zM563.46 417.42h1.8v1.8h-1.8zM568.03 417.42h1.8v1.8h-1.8zM572.60 417.42h1.8v1.8h-1.8zM577.17 417.42h1.8v1.8h-1.8zM581.74 417.42h1.8v1.8h-1.8zM586.31 417.42h1.8v1.8h-1.8zM590.89 417.42h1.8v1.8h-1.8zM595.46 417.42h1.8v1.8h-1.8zM600.03 417.42h1.8v1.8h-1.8zM604.60 417.42h1.8v1.8h-1.8zM609.17 417.42h1.8v1.8h-1.8zM613.74 417.42h1.8v1.8h-1.8zM618.31 417.42h1.8v1.8h-1.8zM622.89 417.42h1.8v1.8h-1.8zM627.46 417.42h1.8v1.8h-1.8zM632.03 417.42h1.8v1.8h-1.8zM636.60 417.42h1.8v1.8h-1.8zM641.17 417.42h1.8v1.8h-1.8zM645.74 417.42h1.8v1.8h-1.8zM650.31 417.42h1.8v1.8h-1.8zM654.89 417.42h1.8v1.8h-1.8zM659.46 417.42h1.8v1.8h-1.8zM664.03 417.42h1.8v1.8h-1.8zM668.60 417.42h1.8v1.8h-1.8zM673.17 417.42h1.8v1.8h-1.8zM677.74 417.42h1.8v1.8h-1.8zM682.31 417.42h1.8v1.8h-1.8zM686.89 417.42h1.8v1.8h-1.8zM691.46 417.42h1.8v1.8h-1.8zM696.03 417.42h1.8v1.8h-1.8zM700.60 417.42h1.8v1.8h-1.8zM705.17 417.42h1.8v1.8h-1.8zM709.74 417.42h1.8v1.8h-1.8zM714.31 417.42h1.8v1.8h-1.8zM718.89 417.42h1.8v1.8h-1.8zM723.46 417.42h1.8v1.8h-1.8zM728.03 417.42h1.8v1.8h-1.8zM732.60 417.42h1.8v1.8h-1.8zM737.17 417.42h1.8v1.8h-1.8zM741.74 417.42h1.8v1.8h-1.8zM746.31 417.42h1.8v1.8h-1.8zM750.89 417.42h1.8v1.8h-1.8zM755.46 417.42h1.8v1.8h-1.8zM760.03 417.42h1.8v1.8h-1.8zM764.60 417.42h1.8v1.8h-1.8zM769.17 417.42h1.8v1.8h-1.8zM773.74 417.42h1.8v1.8h-1.8zM778.31 417.42h1.8v1.8h-1.8zM782.89 417.42h1.8v1.8h-1.8zM787.46 417.42h1.8v1.8h-1.8zM316.60 440.00h1.8v1.8h-1.8zM321.17 440.00h1.8v1.8h-1.8zM325.74 440.00h1.8v1.8h-1.8zM330.31 440.00h1.8v1.8h-1.8zM334.89 440.00h1.8v1.8h-1.8zM339.46 440.00h1.8v1.8h-1.8zM344.03 440.00h1.8v1.8h-1.8zM348.60 440.00h1.8v1.8h-1.8zM353.17 440.00h1.8v1.8h-1.8zM357.74 440.00h1.8v1.8h-1.8zM362.31 440.00h1.8v1.8h-1.8zM366.89 440.00h1.8v1.8h-1.8zM371.46 440.00h1.8v1.8h-1.8zM376.03 440.00h1.8v1.8h-1.8zM380.60 440.00h1.8v1.8h-1.8zM385.17 440.00h1.8v1.8h-1.8zM389.74 440.00h1.8v1.8h-1.8zM394.31 440.00h1.8v1.8h-1.8zM398.89 440.00h1.8v1.8h-1.8zM403.46 440.00h1.8v1.8h-1.8zM408.03 440.00h1.8v1.8h-1.8zM412.60 440.00h1.8v1.8h-1.8zM417.17 440.00h1.8v1.8h-1.8zM421.74 440.00h1.8v1.8h-1.8zM426.31 440.00h1.8v1.8h-1.8zM430.89 440.00h1.8v1.8h-1.8zM435.46 440.00h1.8v1.8h-1.8zM440.03 440.00h1.8v1.8h-1.8zM444.60 440.00h1.8v1.8h-1.8zM449.17 440.00h1.8v1.8h-1.8zM453.74 440.00h1.8v1.8h-1.8zM458.31 440.00h1.8v1.8h-1.8zM462.89 440.00h1.8v1.8h-1.8zM467.46 440.00h1.8v1.8h-1.8zM472.03 440.00h1.8v1.8h-1.8zM476.60 440.00h1.8v1.8h-1.8zM481.17 440.00h1.8v1.8h-1.8zM485.74 440.00h1.8v1.8h-1.8zM490.31 440.00h1.8v1.8h-1.8zM494.89 440.00h1.8v1.8h-1.8zM499.46 440.00h1.8v1.8h-1.8zM504.03 440.00h1.8v1.8h-1.8zM508.60 440.00h1.8v1.8h-1.8zM513.17 440.00h1.8v1.8h-1.8zM517.74 440.00h1.8v1.8h-1.8zM522.31 440.00h1.8v1.8h-1.8zM526.89 440.00h1.8v1.8h-1.8zM531.46 440.00h1.8v1.8h-1.8zM536.03 440.00h1.8v1.8h-1.8zM540.60 440.00h1.8v1.8h-1.8zM545.17 440.00h1.8v1.8h-1.8zM549.74 440.00h1.8v1.8h-1.8zM554.31 440.00h1.8v1.8h-1.8zM558.89 440.00h1.8v1.8h-1.8zM563.46 440.00h1.8v1.8h-1.8zM568.03 440.00h1.8v1.8h-1.8zM572.60 440.00h1.8v1.8h-1.8zM577.17 440.00h1.8v1.8h-1.8zM581.74 440.00h1.8v1.8h-1.8zM586.31 440.00h1.8v1.8h-1.8zM590.89 440.00h1.8v1.8h-1.8zM595.46 440.00h1.8v1.8h-1.8zM600.03 440.00h1.8v1.8h-1.8zM604.60 440.00h1.8v1.8h-1.8zM609.17 440.00h1.8v1.8h-1.8zM613.74 440.00h1.8v1.8h-1.8zM618.31 440.00h1.8v1.8h-1.8zM622.89 440.00h1.8v1.8h-1.8zM627.46 440.00h1.8v1.8h-1.8zM632.03 440.00h1.8v1.8h-1.8zM636.60 440.00h1.8v1.8h-1.8zM641.17 440.00h1.8v1.8h-1.8zM645.74 440.00h1.8v1.8h-1.8zM650.31 440.00h1.8v1.8h-1.8zM654.89 440.00h1.8v1.8h-1.8zM659.46 440.00h1.8v1.8h-1.8zM664.03 440.00h1.8v1.8h-1.8zM668.60 440.00h1.8v1.8h-1.8zM673.17 440.00h1.8v1.8h-1.8zM677.74 440.00h1.8v1.8h-1.8zM682.31 440.00h1.8v1.8h-1.8zM686.89 440.00h1.8v1.8h-1.8zM691.46 440.00h1.8v1.8h-1.8zM696.03 440.00h1.8v1.8h-1.8zM700.60 440.00h1.8v1.8h-1.8zM705.17 440.00h1.8v1.8h-1.8zM709.74 440.00h1.8v1.8h-1.8zM714.31 440.00h1.8v1.8h-1.8zM718.89 440.00h1.8v1.8h-1.8zM723.46 440.00h1.8v1.8h-1.8zM728.03 440.00h1.8v1.8h-1.8zM732.60 440.00h1.8v1.8h-1.8zM737.17 440.00h1.8v1.8h-1.8zM741.74 440.00h1.8v1.8h-1.8zM746.31 440.00h1.8v1.8h-1.8zM750.89 440.00h1.8v1.8h-1.8zM755.46 440.00h1.8v1.8h-1.8zM760.03 440.00h1.8v1.8h-1.8zM764.60 440.00h1.8v1.8h-1.8zM769.17 440.00h1.8v1.8h-1.8zM773.74 440.00h1.8v1.8h-1.8zM778.31 440.00h1.8v1.8h-1.8zM782.89 440.00h1.8v1.8h-1.8zM787.46 440.00h1.8v1.8h-1.8zM316.60 462.58h1.8v1.8h-1.8zM321.17 462.58h1.8v1.8h-1.8zM325.74 462.58h1.8v1.8h-1.8zM330.31 462.58h1.8v1.8h-1.8zM334.89 462.58h1.8v1.8h-1.8zM339.46 462.58h1.8v1.8h-1.8zM344.03 462.58h1.8v1.8h-1.8zM348.60 462.58h1.8v1.8h-1.8zM353.17 462.58h1.8v1.8h-1.8zM357.74 462.58h1.8v1.8h-1.8zM362.31 462.58h1.8v1.8h-1.8zM366.89 462.58h1.8v1.8h-1.8zM371.46 462.58h1.8v1.8h-1.8zM376.03 462.58h1.8v1.8h-1.8zM380.60 462.58h1.8v1.8h-1.8zM385.17 462.58h1.8v1.8h-1.8zM389.74 462.58h1.8v1.8h-1.8zM394.31 462.58h1.8v1.8h-1.8zM398.89 462.58h1.8v1.8h-1.8zM403.46 462.58h1.8v1.8h-1.8zM408.03 462.58h1.8v1.8h-1.8zM412.60 462.58h1.8v1.8h-1.8zM417.17 462.58h1.8v1.8h-1.8zM421.74 462.58h1.8v1.8h-1.8zM426.31 462.58h1.8v1.8h-1.8zM430.89 462.58h1.8v1.8h-1.8zM435.46 462.58h1.8v1.8h-1.8zM440.03 462.58h1.8v1.8h-1.8zM444.60 462.58h1.8v1.8h-1.8zM449.17 462.58h1.8v1.8h-1.8zM453.74 462.58h1.8v1.8h-1.8zM458.31 462.58h1.8v1.8h-1.8zM462.89 462.58h1.8v1.8h-1.8zM467.46 462.58h1.8v1.8h-1.8zM472.03 462.58h1.8v1.8h-1.8zM476.60 462.58h1.8v1.8h-1.8zM481.17 462.58h1.8v1.8h-1.8zM485.74 462.58h1.8v1.8h-1.8zM490.31 462.58h1.8v1.8h-1.8zM494.89 462.58h1.8v1.8h-1.8zM499.46 462.58h1.8v1.8h-1.8zM504.03 462.58h1.8v1.8h-1.8zM508.60 462.58h1.8v1.8h-1.8zM513.17 462.58h1.8v1.8h-1.8zM517.74 462.58h1.8v1.8h-1.8zM522.31 462.58h1.8v1.8h-1.8zM526.89 462.58h1.8v1.8h-1.8zM531.46 462.58h1.8v1.8h-1.8zM536.03 462.58h1.8v1.8h-1.8zM540.60 462.58h1.8v1.8h-1.8zM545.17 462.58h1.8v1.8h-1.8zM549.74 462.58h1.8v1.8h-1.8zM554.31 462.58h1.8v1.8h-1.8zM558.89 462.58h1.8v1.8h-1.8zM563.46 462.58h1.8v1.8h-1.8zM568.03 462.58h1.8v1.8h-1.8zM572.60 462.58h1.8v1.8h-1.8zM577.17 462.58h1.8v1.8h-1.8zM581.74 462.58h1.8v1.8h-1.8zM586.31 462.58h1.8v1.8h-1.8zM590.89 462.58h1.8v1.8h-1.8zM595.46 462.58h1.8v1.8h-1.8zM600.03 462.58h1.8v1.8h-1.8zM604.60 462.58h1.8v1.8h-1.8zM609.17 462.58h1.8v1.8h-1.8zM613.74 462.58h1.8v1.8h-1.8zM618.31 462.58h1.8v1.8h-1.8zM622.89 462.58h1.8v1.8h-1.8zM627.46 462.58h1.8v1.8h-1.8zM632.03 462.58h1.8v1.8h-1.8zM636.60 462.58h1.8v1.8h-1.8zM641.17 462.58h1.8v1.8h-1.8zM645.74 462.58h1.8v1.8h-1.8zM650.31 462.58h1.8v1.8h-1.8zM654.89 462.58h1.8v1.8h-1.8zM659.46 462.58h1.8v1.8h-1.8zM664.03 462.58h1.8v1.8h-1.8zM668.60 462.58h1.8v1.8h-1.8zM673.17 462.58h1.8v1.8h-1.8zM677.74 462.58h1.8v1.8h-1.8zM682.31 462.58h1.8v1.8h-1.8zM686.89 462.58h1.8v1.8h-1.8zM691.46 462.58h1.8v1.8h-1.8zM696.03 462.58h1.8v1.8h-1.8zM700.60 462.58h1.8v1.8h-1.8zM705.17 462.58h1.8v1.8h-1.8zM709.74 462.58h1.8v1.8h-1.8zM714.31 462.58h1.8v1.8h-1.8zM718.89 462.58h1.8v1.8h-1.8zM723.46 462.58h1.8v1.8h-1.8zM728.03 462.58h1.8v1.8h-1.8zM732.60 462.58h1.8v1.8h-1.8zM737.17 462.58h1.8v1.8h-1.8zM741.74 462.58h1.8v1.8h-1.8zM746.31 462.58h1.8v1.8h-1.8zM750.89 462.58h1.8v1.8h-1.8zM755.46 462.58h1.8v1.8h-1.8zM760.03 462.58h1.8v1.8h-1.8zM764.60 462.58h1.8v1.8h-1.8zM769.17 462.58h1.8v1.8h-1.8zM773.74 462.58h1.8v1.8h-1.8zM778.31 462.58h1.8v1.8h-1.8zM782.89 462.58h1.8v1.8h-1.8zM787.46 462.58h1.8v1.8h-1.8zM316.60 485.16h1.8v1.8h-1.8zM321.17 485.16h1.8v1.8h-1.8zM325.74 485.16h1.8v1.8h-1.8zM330.31 485.16h1.8v1.8h-1.8zM334.89 485.16h1.8v1.8h-1.8zM339.46 485.16h1.8v1.8h-1.8zM344.03 485.16h1.8v1.8h-1.8zM348.60 485.16h1.8v1.8h-1.8zM353.17 485.16h1.8v1.8h-1.8zM357.74 485.16h1.8v1.8h-1.8zM362.31 485.16h1.8v1.8h-1.8zM366.89 485.16h1.8v1.8h-1.8zM371.46 485.16h1.8v1.8h-1.8zM376.03 485.16h1.8v1.8h-1.8zM380.60 485.16h1.8v1.8h-1.8zM385.17 485.16h1.8v1.8h-1.8zM389.74 485.16h1.8v1.8h-1.8zM394.31 485.16h1.8v1.8h-1.8zM398.89 485.16h1.8v1.8h-1.8zM403.46 485.16h1.8v1.8h-1.8zM408.03 485.16h1.8v1.8h-1.8zM412.60 485.16h1.8v1.8h-1.8zM417.17 485.16h1.8v1.8h-1.8zM421.74 485.16h1.8v1.8h-1.8zM426.31 485.16h1.8v1.8h-1.8zM430.89 485.16h1.8v1.8h-1.8zM435.46 485.16h1.8v1.8h-1.8zM440.03 485.16h1.8v1.8h-1.8zM444.60 485.16h1.8v1.8h-1.8zM449.17 485.16h1.8v1.8h-1.8zM453.74 485.16h1.8v1.8h-1.8zM458.31 485.16h1.8v1.8h-1.8zM462.89 485.16h1.8v1.8h-1.8zM467.46 485.16h1.8v1.8h-1.8zM472.03 485.16h1.8v1.8h-1.8zM476.60 485.16h1.8v1.8h-1.8zM481.17 485.16h1.8v1.8h-1.8zM485.74 485.16h1.8v1.8h-1.8zM490.31 485.16h1.8v1.8h-1.8zM494.89 485.16h1.8v1.8h-1.8zM499.46 485.16h1.8v1.8h-1.8zM504.03 485.16h1.8v1.8h-1.8zM508.60 485.16h1.8v1.8h-1.8zM513.17 485.16h1.8v1.8h-1.8zM517.74 485.16h1.8v1.8h-1.8zM522.31 485.16h1.8v1.8h-1.8zM526.89 485.16h1.8v1.8h-1.8zM531.46 485.16h1.8v1.8h-1.8zM536.03 485.16h1.8v1.8h-1.8zM540.60 485.16h1.8v1.8h-1.8zM545.17 485.16h1.8v1.8h-1.8zM549.74 485.16h1.8v1.8h-1.8zM554.31 485.16h1.8v1.8h-1.8zM558.89 485.16h1.8v1.8h-1.8zM563.46 485.16h1.8v1.8h-1.8zM568.03 485.16h1.8v1.8h-1.8zM572.60 485.16h1.8v1.8h-1.8zM577.17 485.16h1.8v1.8h-1.8zM581.74 485.16h1.8v1.8h-1.8zM586.31 485.16h1.8v1.8h-1.8zM590.89 485.16h1.8v1.8h-1.8zM595.46 485.16h1.8v1.8h-1.8zM600.03 485.16h1.8v1.8h-1.8zM604.60 485.16h1.8v1.8h-1.8zM609.17 485.16h1.8v1.8h-1.8zM613.74 485.16h1.8v1.8h-1.8zM618.31 485.16h1.8v1.8h-1.8zM622.89 485.16h1.8v1.8h-1.8zM627.46 485.16h1.8v1.8h-1.8zM632.03 485.16h1.8v1.8h-1.8zM636.60 485.16h1.8v1.8h-1.8zM641.17 485.16h1.8v1.8h-1.8zM645.74 485.16h1.8v1.8h-1.8zM650.31 485.16h1.8v1.8h-1.8zM654.89 485.16h1.8v1.8h-1.8zM659.46 485.16h1.8v1.8h-1.8zM664.03 485.16h1.8v1.8h-1.8zM668.60 485.16h1.8v1.8h-1.8zM673.17 485.16h1.8v1.8h-1.8zM677.74 485.16h1.8v1.8h-1.8zM682.31 485.16h1.8v1.8h-1.8zM686.89 485.16h1.8v1.8h-1.8zM691.46 485.16h1.8v1.8h-1.8zM696.03 485.16h1.8v1.8h-1.8zM700.60 485.16h1.8v1.8h-1.8zM705.17 485.16h1.8v1.8h-1.8zM709.74 485.16h1.8v1.8h-1.8zM714.31 485.16h1.8v1.8h-1.8zM718.89 485.16h1.8v1.8h-1.8zM723.46 485.16h1.8v1.8h-1.8zM728.03 485.16h1.8v1.8h-1.8zM732.60 485.16h1.8v1.8h-1.8zM737.17 485.16h1.8v1.8h-1.8zM741.74 485.16h1.8v1.8h-1.8zM746.31 485.16h1.8v1.8h-1.8zM750.89 485.16h1.8v1.8h-1.8zM755.46 485.16h1.8v1.8h-1.8zM760.03 485.16h1.8v1.8h-1.8zM764.60 485.16h1.8v1.8h-1.8zM769.17 485.16h1.8v1.8h-1.8zM773.74 485.16h1.8v1.8h-1.8zM778.31 485.16h1.8v1.8h-1.8zM782.89 485.16h1.8v1.8h-1.8zM787.46 485.16h1.8v1.8h-1.8zM316.60 507.74h1.8v1.8h-1.8zM321.17 507.74h1.8v1.8h-1.8zM325.74 507.74h1.8v1.8h-1.8zM330.31 507.74h1.8v1.8h-1.8zM334.89 507.74h1.8v1.8h-1.8zM339.46 507.74h1.8v1.8h-1.8zM344.03 507.74h1.8v1.8h-1.8zM348.60 507.74h1.8v1.8h-1.8zM353.17 507.74h1.8v1.8h-1.8zM357.74 507.74h1.8v1.8h-1.8zM362.31 507.74h1.8v1.8h-1.8zM366.89 507.74h1.8v1.8h-1.8zM371.46 507.74h1.8v1.8h-1.8zM376.03 507.74h1.8v1.8h-1.8zM380.60 507.74h1.8v1.8h-1.8zM385.17 507.74h1.8v1.8h-1.8zM389.74 507.74h1.8v1.8h-1.8zM394.31 507.74h1.8v1.8h-1.8zM398.89 507.74h1.8v1.8h-1.8zM403.46 507.74h1.8v1.8h-1.8zM408.03 507.74h1.8v1.8h-1.8zM412.60 507.74h1.8v1.8h-1.8zM417.17 507.74h1.8v1.8h-1.8zM421.74 507.74h1.8v1.8h-1.8zM426.31 507.74h1.8v1.8h-1.8zM430.89 507.74h1.8v1.8h-1.8zM435.46 507.74h1.8v1.8h-1.8zM440.03 507.74h1.8v1.8h-1.8zM444.60 507.74h1.8v1.8h-1.8zM449.17 507.74h1.8v1.8h-1.8zM453.74 507.74h1.8v1.8h-1.8zM458.31 507.74h1.8v1.8h-1.8zM462.89 507.74h1.8v1.8h-1.8zM467.46 507.74h1.8v1.8h-1.8zM472.03 507.74h1.8v1.8h-1.8zM476.60 507.74h1.8v1.8h-1.8zM481.17 507.74h1.8v1.8h-1.8zM485.74 507.74h1.8v1.8h-1.8zM490.31 507.74h1.8v1.8h-1.8zM494.89 507.74h1.8v1.8h-1.8zM499.46 507.74h1.8v1.8h-1.8zM504.03 507.74h1.8v1.8h-1.8zM508.60 507.74h1.8v1.8h-1.8zM513.17 507.74h1.8v1.8h-1.8zM517.74 507.74h1.8v1.8h-1.8zM522.31 507.74h1.8v1.8h-1.8zM526.89 507.74h1.8v1.8h-1.8zM531.46 507.74h1.8v1.8h-1.8zM536.03 507.74h1.8v1.8h-1.8zM540.60 507.74h1.8v1.8h-1.8zM545.17 507.74h1.8v1.8h-1.8zM549.74 507.74h1.8v1.8h-1.8zM554.31 507.74h1.8v1.8h-1.8zM558.89 507.74h1.8v1.8h-1.8zM563.46 507.74h1.8v1.8h-1.8zM568.03 507.74h1.8v1.8h-1.8zM572.60 507.74h1.8v1.8h-1.8zM577.17 507.74h1.8v1.8h-1.8zM581.74 507.74h1.8v1.8h-1.8zM586.31 507.74h1.8v1.8h-1.8zM590.89 507.74h1.8v1.8h-1.8zM595.46 507.74h1.8v1.8h-1.8zM600.03 507.74h1.8v1.8h-1.8zM604.60 507.74h1.8v1.8h-1.8zM609.17 507.74h1.8v1.8h-1.8zM613.74 507.74h1.8v1.8h-1.8zM618.31 507.74h1.8v1.8h-1.8zM622.89 507.74h1.8v1.8h-1.8zM627.46 507.74h1.8v1.8h-1.8zM632.03 507.74h1.8v1.8h-1.8zM636.60 507.74h1.8v1.8h-1.8zM641.17 507.74h1.8v1.8h-1.8zM645.74 507.74h1.8v1.8h-1.8zM650.31 507.74h1.8v1.8h-1.8zM654.89 507.74h1.8v1.8h-1.8zM659.46 507.74h1.8v1.8h-1.8zM664.03 507.74h1.8v1.8h-1.8zM668.60 507.74h1.8v1.8h-1.8zM673.17 507.74h1.8v1.8h-1.8zM677.74 507.74h1.8v1.8h-1.8zM682.31 507.74h1.8v1.8h-1.8zM686.89 507.74h1.8v1.8h-1.8zM691.46 507.74h1.8v1.8h-1.8zM696.03 507.74h1.8v1.8h-1.8zM700.60 507.74h1.8v1.8h-1.8zM705.17 507.74h1.8v1.8h-1.8zM709.74 507.74h1.8v1.8h-1.8zM714.31 507.74h1.8v1.8h-1.8zM718.89 507.74h1.8v1.8h-1.8zM723.46 507.74h1.8v1.8h-1.8zM728.03 507.74h1.8v1.8h-1.8zM732.60 507.74h1.8v1.8h-1.8zM737.17 507.74h1.8v1.8h-1.8zM741.74 507.74h1.8v1.8h-1.8zM746.31 507.74h1.8v1.8h-1.8zM750.89 507.74h1.8v1.8h-1.8zM755.46 507.74h1.8v1.8h-1.8zM760.03 507.74h1.8v1.8h-1.8zM764.60 507.74h1.8v1.8h-1.8zM769.17 507.74h1.8v1.8h-1.8zM773.74 507.74h1.8v1.8h-1.8zM778.31 507.74h1.8v1.8h-1.8zM782.89 507.74h1.8v1.8h-1.8zM787.46 507.74h1.8v1.8h-1.8zM316.60 530.32h1.8v1.8h-1.8zM321.17 530.32h1.8v1.8h-1.8zM325.74 530.32h1.8v1.8h-1.8zM330.31 530.32h1.8v1.8h-1.8zM334.89 530.32h1.8v1.8h-1.8zM339.46 530.32h1.8v1.8h-1.8zM344.03 530.32h1.8v1.8h-1.8zM348.60 530.32h1.8v1.8h-1.8zM353.17 530.32h1.8v1.8h-1.8zM357.74 530.32h1.8v1.8h-1.8zM362.31 530.32h1.8v1.8h-1.8zM366.89 530.32h1.8v1.8h-1.8zM371.46 530.32h1.8v1.8h-1.8zM376.03 530.32h1.8v1.8h-1.8zM380.60 530.32h1.8v1.8h-1.8zM385.17 530.32h1.8v1.8h-1.8zM389.74 530.32h1.8v1.8h-1.8zM394.31 530.32h1.8v1.8h-1.8zM398.89 530.32h1.8v1.8h-1.8zM403.46 530.32h1.8v1.8h-1.8zM408.03 530.32h1.8v1.8h-1.8zM412.60 530.32h1.8v1.8h-1.8zM417.17 530.32h1.8v1.8h-1.8zM421.74 530.32h1.8v1.8h-1.8zM426.31 530.32h1.8v1.8h-1.8zM430.89 530.32h1.8v1.8h-1.8zM435.46 530.32h1.8v1.8h-1.8zM440.03 530.32h1.8v1.8h-1.8zM444.60 530.32h1.8v1.8h-1.8zM449.17 530.32h1.8v1.8h-1.8zM453.74 530.32h1.8v1.8h-1.8zM458.31 530.32h1.8v1.8h-1.8zM462.89 530.32h1.8v1.8h-1.8zM467.46 530.32h1.8v1.8h-1.8zM472.03 530.32h1.8v1.8h-1.8zM476.60 530.32h1.8v1.8h-1.8zM481.17 530.32h1.8v1.8h-1.8zM485.74 530.32h1.8v1.8h-1.8zM490.31 530.32h1.8v1.8h-1.8zM494.89 530.32h1.8v1.8h-1.8zM499.46 530.32h1.8v1.8h-1.8zM504.03 530.32h1.8v1.8h-1.8zM508.60 530.32h1.8v1.8h-1.8zM513.17 530.32h1.8v1.8h-1.8zM517.74 530.32h1.8v1.8h-1.8zM522.31 530.32h1.8v1.8h-1.8zM526.89 530.32h1.8v1.8h-1.8zM531.46 530.32h1.8v1.8h-1.8zM536.03 530.32h1.8v1.8h-1.8zM540.60 530.32h1.8v1.8h-1.8zM545.17 530.32h1.8v1.8h-1.8zM549.74 530.32h1.8v1.8h-1.8zM554.31 530.32h1.8v1.8h-1.8zM558.89 530.32h1.8v1.8h-1.8zM563.46 530.32h1.8v1.8h-1.8zM568.03 530.32h1.8v1.8h-1.8zM572.60 530.32h1.8v1.8h-1.8zM577.17 530.32h1.8v1.8h-1.8zM581.74 530.32h1.8v1.8h-1.8zM586.31 530.32h1.8v1.8h-1.8zM590.89 530.32h1.8v1.8h-1.8zM595.46 530.32h1.8v1.8h-1.8zM600.03 530.32h1.8v1.8h-1.8zM604.60 530.32h1.8v1.8h-1.8zM609.17 530.32h1.8v1.8h-1.8zM613.74 530.32h1.8v1.8h-1.8zM618.31 530.32h1.8v1.8h-1.8zM622.89 530.32h1.8v1.8h-1.8zM627.46 530.32h1.8v1.8h-1.8zM632.03 530.32h1.8v1.8h-1.8zM636.60 530.32h1.8v1.8h-1.8zM641.17 530.32h1.8v1.8h-1.8zM645.74 530.32h1.8v1.8h-1.8zM650.31 530.32h1.8v1.8h-1.8zM654.89 530.32h1.8v1.8h-1.8zM659.46 530.32h1.8v1.8h-1.8zM664.03 530.32h1.8v1.8h-1.8zM668.60 530.32h1.8v1.8h-1.8zM673.17 530.32h1.8v1.8h-1.8zM677.74 530.32h1.8v1.8h-1.8zM682.31 530.32h1.8v1.8h-1.8zM686.89 530.32h1.8v1.8h-1.8zM691.46 530.32h1.8v1.8h-1.8zM696.03 530.32h1.8v1.8h-1.8zM700.60 530.32h1.8v1.8h-1.8zM705.17 530.32h1.8v1.8h-1.8zM709.74 530.32h1.8v1.8h-1.8zM714.31 530.32h1.8v1.8h-1.8zM718.89 530.32h1.8v1.8h-1.8zM723.46 530.32h1.8v1.8h-1.8zM728.03 530.32h1.8v1.8h-1.8zM732.60 530.32h1.8v1.8h-1.8zM737.17 530.32h1.8v1.8h-1.8zM741.74 530.32h1.8v1.8h-1.8zM746.31 530.32h1.8v1.8h-1.8zM750.89 530.32h1.8v1.8h-1.8zM755.46 530.32h1.8v1.8h-1.8zM760.03 530.32h1.8v1.8h-1.8zM764.60 530.32h1.8v1.8h-1.8zM769.17 530.32h1.8v1.8h-1.8zM773.74 530.32h1.8v1.8h-1.8zM778.31 530.32h1.8v1.8h-1.8zM782.89 530.32h1.8v1.8h-1.8zM787.46 530.32h1.8v1.8h-1.8zM316.60 552.90h1.8v1.8h-1.8zM321.17 552.90h1.8v1.8h-1.8zM325.74 552.90h1.8v1.8h-1.8zM330.31 552.90h1.8v1.8h-1.8zM334.89 552.90h1.8v1.8h-1.8zM339.46 552.90h1.8v1.8h-1.8zM344.03 552.90h1.8v1.8h-1.8zM348.60 552.90h1.8v1.8h-1.8zM353.17 552.90h1.8v1.8h-1.8zM357.74 552.90h1.8v1.8h-1.8zM362.31 552.90h1.8v1.8h-1.8zM366.89 552.90h1.8v1.8h-1.8zM371.46 552.90h1.8v1.8h-1.8zM376.03 552.90h1.8v1.8h-1.8zM380.60 552.90h1.8v1.8h-1.8zM385.17 552.90h1.8v1.8h-1.8zM389.74 552.90h1.8v1.8h-1.8zM394.31 552.90h1.8v1.8h-1.8zM398.89 552.90h1.8v1.8h-1.8zM403.46 552.90h1.8v1.8h-1.8zM408.03 552.90h1.8v1.8h-1.8zM412.60 552.90h1.8v1.8h-1.8zM417.17 552.90h1.8v1.8h-1.8zM421.74 552.90h1.8v1.8h-1.8zM426.31 552.90h1.8v1.8h-1.8zM430.89 552.90h1.8v1.8h-1.8zM435.46 552.90h1.8v1.8h-1.8zM440.03 552.90h1.8v1.8h-1.8zM444.60 552.90h1.8v1.8h-1.8zM449.17 552.90h1.8v1.8h-1.8zM453.74 552.90h1.8v1.8h-1.8zM458.31 552.90h1.8v1.8h-1.8zM462.89 552.90h1.8v1.8h-1.8zM467.46 552.90h1.8v1.8h-1.8zM472.03 552.90h1.8v1.8h-1.8zM476.60 552.90h1.8v1.8h-1.8zM481.17 552.90h1.8v1.8h-1.8zM485.74 552.90h1.8v1.8h-1.8zM490.31 552.90h1.8v1.8h-1.8zM494.89 552.90h1.8v1.8h-1.8zM499.46 552.90h1.8v1.8h-1.8zM504.03 552.90h1.8v1.8h-1.8zM508.60 552.90h1.8v1.8h-1.8zM513.17 552.90h1.8v1.8h-1.8zM517.74 552.90h1.8v1.8h-1.8zM522.31 552.90h1.8v1.8h-1.8zM526.89 552.90h1.8v1.8h-1.8zM531.46 552.90h1.8v1.8h-1.8zM536.03 552.90h1.8v1.8h-1.8zM540.60 552.90h1.8v1.8h-1.8zM545.17 552.90h1.8v1.8h-1.8zM549.74 552.90h1.8v1.8h-1.8zM554.31 552.90h1.8v1.8h-1.8zM558.89 552.90h1.8v1.8h-1.8zM563.46 552.90h1.8v1.8h-1.8zM568.03 552.90h1.8v1.8h-1.8zM572.60 552.90h1.8v1.8h-1.8zM577.17 552.90h1.8v1.8h-1.8zM581.74 552.90h1.8v1.8h-1.8zM586.31 552.90h1.8v1.8h-1.8zM590.89 552.90h1.8v1.8h-1.8zM595.46 552.90h1.8v1.8h-1.8zM600.03 552.90h1.8v1.8h-1.8zM604.60 552.90h1.8v1.8h-1.8zM609.17 552.90h1.8v1.8h-1.8zM613.74 552.90h1.8v1.8h-1.8zM618.31 552.90h1.8v1.8h-1.8zM622.89 552.90h1.8v1.8h-1.8zM627.46 552.90h1.8v1.8h-1.8zM632.03 552.90h1.8v1.8h-1.8zM636.60 552.90h1.8v1.8h-1.8zM641.17 552.90h1.8v1.8h-1.8zM645.74 552.90h1.8v1.8h-1.8zM650.31 552.90h1.8v1.8h-1.8zM654.89 552.90h1.8v1.8h-1.8zM659.46 552.90h1.8v1.8h-1.8zM664.03 552.90h1.8v1.8h-1.8zM668.60 552.90h1.8v1.8h-1.8zM673.17 552.90h1.8v1.8h-1.8zM677.74 552.90h1.8v1.8h-1.8zM682.31 552.90h1.8v1.8h-1.8zM686.89 552.90h1.8v1.8h-1.8zM691.46 552.90h1.8v1.8h-1.8zM696.03 552.90h1.8v1.8h-1.8zM700.60 552.90h1.8v1.8h-1.8zM705.17 552.90h1.8v1.8h-1.8zM709.74 552.90h1.8v1.8h-1.8zM714.31 552.90h1.8v1.8h-1.8zM718.89 552.90h1.8v1.8h-1.8zM723.46 552.90h1.8v1.8h-1.8zM728.03 552.90h1.8v1.8h-1.8zM732.60 552.90h1.8v1.8h-1.8zM737.17 552.90h1.8v1.8h-1.8zM741.74 552.90h1.8v1.8h-1.8zM746.31 552.90h1.8v1.8h-1.8zM750.89 552.90h1.8v1.8h-1.8zM755.46 552.90h1.8v1.8h-1.8zM760.03 552.90h1.8v1.8h-1.8zM764.60 552.90h1.8v1.8h-1.8zM769.17 552.90h1.8v1.8h-1.8zM773.74 552.90h1.8v1.8h-1.8zM778.31 552.90h1.8v1.8h-1.8zM782.89 552.90h1.8v1.8h-1.8zM787.46 552.90h1.8v1.8h-1.8zM316.60 575.48h1.8v1.8h-1.8zM321.17 575.48h1.8v1.8h-1.8zM325.74 575.48h1.8v1.8h-1.8zM330.31 575.48h1.8v1.8h-1.8zM334.89 575.48h1.8v1.8h-1.8zM339.46 575.48h1.8v1.8h-1.8zM344.03 575.48h1.8v1.8h-1.8zM348.60 575.48h1.8v1.8h-1.8zM353.17 575.48h1.8v1.8h-1.8zM357.74 575.48h1.8v1.8h-1.8zM362.31 575.48h1.8v1.8h-1.8zM366.89 575.48h1.8v1.8h-1.8zM371.46 575.48h1.8v1.8h-1.8zM376.03 575.48h1.8v1.8h-1.8zM380.60 575.48h1.8v1.8h-1.8zM385.17 575.48h1.8v1.8h-1.8zM389.74 575.48h1.8v1.8h-1.8zM394.31 575.48h1.8v1.8h-1.8zM398.89 575.48h1.8v1.8h-1.8zM403.46 575.48h1.8v1.8h-1.8zM408.03 575.48h1.8v1.8h-1.8zM412.60 575.48h1.8v1.8h-1.8zM417.17 575.48h1.8v1.8h-1.8zM421.74 575.48h1.8v1.8h-1.8zM426.31 575.48h1.8v1.8h-1.8zM430.89 575.48h1.8v1.8h-1.8zM435.46 575.48h1.8v1.8h-1.8zM440.03 575.48h1.8v1.8h-1.8zM444.60 575.48h1.8v1.8h-1.8zM449.17 575.48h1.8v1.8h-1.8zM453.74 575.48h1.8v1.8h-1.8zM458.31 575.48h1.8v1.8h-1.8zM462.89 575.48h1.8v1.8h-1.8zM467.46 575.48h1.8v1.8h-1.8zM472.03 575.48h1.8v1.8h-1.8zM476.60 575.48h1.8v1.8h-1.8zM481.17 575.48h1.8v1.8h-1.8zM485.74 575.48h1.8v1.8h-1.8zM490.31 575.48h1.8v1.8h-1.8zM494.89 575.48h1.8v1.8h-1.8zM499.46 575.48h1.8v1.8h-1.8zM504.03 575.48h1.8v1.8h-1.8zM508.60 575.48h1.8v1.8h-1.8zM513.17 575.48h1.8v1.8h-1.8zM517.74 575.48h1.8v1.8h-1.8zM522.31 575.48h1.8v1.8h-1.8zM526.89 575.48h1.8v1.8h-1.8zM531.46 575.48h1.8v1.8h-1.8zM536.03 575.48h1.8v1.8h-1.8zM540.60 575.48h1.8v1.8h-1.8zM545.17 575.48h1.8v1.8h-1.8zM549.74 575.48h1.8v1.8h-1.8zM554.31 575.48h1.8v1.8h-1.8zM558.89 575.48h1.8v1.8h-1.8zM563.46 575.48h1.8v1.8h-1.8zM568.03 575.48h1.8v1.8h-1.8zM572.60 575.48h1.8v1.8h-1.8zM577.17 575.48h1.8v1.8h-1.8zM581.74 575.48h1.8v1.8h-1.8zM586.31 575.48h1.8v1.8h-1.8zM590.89 575.48h1.8v1.8h-1.8zM595.46 575.48h1.8v1.8h-1.8zM600.03 575.48h1.8v1.8h-1.8zM604.60 575.48h1.8v1.8h-1.8zM609.17 575.48h1.8v1.8h-1.8zM613.74 575.48h1.8v1.8h-1.8zM618.31 575.48h1.8v1.8h-1.8zM622.89 575.48h1.8v1.8h-1.8zM627.46 575.48h1.8v1.8h-1.8zM632.03 575.48h1.8v1.8h-1.8zM636.60 575.48h1.8v1.8h-1.8zM641.17 575.48h1.8v1.8h-1.8zM645.74 575.48h1.8v1.8h-1.8zM650.31 575.48h1.8v1.8h-1.8zM654.89 575.48h1.8v1.8h-1.8zM659.46 575.48h1.8v1.8h-1.8zM664.03 575.48h1.8v1.8h-1.8zM668.60 575.48h1.8v1.8h-1.8zM673.17 575.48h1.8v1.8h-1.8zM677.74 575.48h1.8v1.8h-1.8zM682.31 575.48h1.8v1.8h-1.8zM686.89 575.48h1.8v1.8h-1.8zM691.46 575.48h1.8v1.8h-1.8zM696.03 575.48h1.8v1.8h-1.8zM700.60 575.48h1.8v1.8h-1.8zM705.17 575.48h1.8v1.8h-1.8zM709.74 575.48h1.8v1.8h-1.8zM714.31 575.48h1.8v1.8h-1.8zM718.89 575.48h1.8v1.8h-1.8zM723.46 575.48h1.8v1.8h-1.8zM728.03 575.48h1.8v1.8h-1.8zM732.60 575.48h1.8v1.8h-1.8zM737.17 575.48h1.8v1.8h-1.8zM741.74 575.48h1.8v1.8h-1.8zM746.31 575.48h1.8v1.8h-1.8zM750.89 575.48h1.8v1.8h-1.8zM755.46 575.48h1.8v1.8h-1.8zM760.03 575.48h1.8v1.8h-1.8zM764.60 575.48h1.8v1.8h-1.8zM769.17 575.48h1.8v1.8h-1.8zM773.74 575.48h1.8v1.8h-1.8zM778.31 575.48h1.8v1.8h-1.8zM782.89 575.48h1.8v1.8h-1.8zM787.46 575.48h1.8v1.8h-1.8zM316.60 598.06h1.8v1.8h-1.8zM321.17 598.06h1.8v1.8h-1.8zM325.74 598.06h1.8v1.8h-1.8zM330.31 598.06h1.8v1.8h-1.8zM334.89 598.06h1.8v1.8h-1.8zM339.46 598.06h1.8v1.8h-1.8zM344.03 598.06h1.8v1.8h-1.8zM348.60 598.06h1.8v1.8h-1.8zM353.17 598.06h1.8v1.8h-1.8zM357.74 598.06h1.8v1.8h-1.8zM362.31 598.06h1.8v1.8h-1.8zM366.89 598.06h1.8v1.8h-1.8zM371.46 598.06h1.8v1.8h-1.8zM376.03 598.06h1.8v1.8h-1.8zM380.60 598.06h1.8v1.8h-1.8zM385.17 598.06h1.8v1.8h-1.8zM389.74 598.06h1.8v1.8h-1.8zM394.31 598.06h1.8v1.8h-1.8zM398.89 598.06h1.8v1.8h-1.8zM403.46 598.06h1.8v1.8h-1.8zM408.03 598.06h1.8v1.8h-1.8zM412.60 598.06h1.8v1.8h-1.8zM417.17 598.06h1.8v1.8h-1.8zM421.74 598.06h1.8v1.8h-1.8zM426.31 598.06h1.8v1.8h-1.8zM430.89 598.06h1.8v1.8h-1.8zM435.46 598.06h1.8v1.8h-1.8zM440.03 598.06h1.8v1.8h-1.8zM444.60 598.06h1.8v1.8h-1.8zM449.17 598.06h1.8v1.8h-1.8zM453.74 598.06h1.8v1.8h-1.8zM458.31 598.06h1.8v1.8h-1.8zM462.89 598.06h1.8v1.8h-1.8zM467.46 598.06h1.8v1.8h-1.8zM472.03 598.06h1.8v1.8h-1.8zM476.60 598.06h1.8v1.8h-1.8zM481.17 598.06h1.8v1.8h-1.8zM485.74 598.06h1.8v1.8h-1.8zM490.31 598.06h1.8v1.8h-1.8zM494.89 598.06h1.8v1.8h-1.8zM499.46 598.06h1.8v1.8h-1.8zM504.03 598.06h1.8v1.8h-1.8zM508.60 598.06h1.8v1.8h-1.8zM513.17 598.06h1.8v1.8h-1.8zM517.74 598.06h1.8v1.8h-1.8zM522.31 598.06h1.8v1.8h-1.8zM526.89 598.06h1.8v1.8h-1.8zM531.46 598.06h1.8v1.8h-1.8zM536.03 598.06h1.8v1.8h-1.8zM540.60 598.06h1.8v1.8h-1.8zM545.17 598.06h1.8v1.8h-1.8zM549.74 598.06h1.8v1.8h-1.8zM554.31 598.06h1.8v1.8h-1.8zM558.89 598.06h1.8v1.8h-1.8zM563.46 598.06h1.8v1.8h-1.8zM568.03 598.06h1.8v1.8h-1.8zM572.60 598.06h1.8v1.8h-1.8zM577.17 598.06h1.8v1.8h-1.8zM581.74 598.06h1.8v1.8h-1.8zM586.31 598.06h1.8v1.8h-1.8zM590.89 598.06h1.8v1.8h-1.8zM595.46 598.06h1.8v1.8h-1.8zM600.03 598.06h1.8v1.8h-1.8zM604.60 598.06h1.8v1.8h-1.8zM609.17 598.06h1.8v1.8h-1.8zM613.74 598.06h1.8v1.8h-1.8zM618.31 598.06h1.8v1.8h-1.8zM622.89 598.06h1.8v1.8h-1.8zM627.46 598.06h1.8v1.8h-1.8zM632.03 598.06h1.8v1.8h-1.8zM636.60 598.06h1.8v1.8h-1.8zM641.17 598.06h1.8v1.8h-1.8zM645.74 598.06h1.8v1.8h-1.8zM650.31 598.06h1.8v1.8h-1.8zM654.89 598.06h1.8v1.8h-1.8zM659.46 598.06h1.8v1.8h-1.8zM664.03 598.06h1.8v1.8h-1.8zM668.60 598.06h1.8v1.8h-1.8zM673.17 598.06h1.8v1.8h-1.8zM677.74 598.06h1.8v1.8h-1.8zM682.31 598.06h1.8v1.8h-1.8zM686.89 598.06h1.8v1.8h-1.8zM691.46 598.06h1.8v1.8h-1.8zM696.03 598.06h1.8v1.8h-1.8zM700.60 598.06h1.8v1.8h-1.8zM705.17 598.06h1.8v1.8h-1.8zM709.74 598.06h1.8v1.8h-1.8zM714.31 598.06h1.8v1.8h-1.8zM718.89 598.06h1.8v1.8h-1.8zM723.46 598.06h1.8v1.8h-1.8zM728.03 598.06h1.8v1.8h-1.8zM732.60 598.06h1.8v1.8h-1.8zM737.17 598.06h1.8v1.8h-1.8zM741.74 598.06h1.8v1.8h-1.8zM746.31 598.06h1.8v1.8h-1.8zM750.89 598.06h1.8v1.8h-1.8zM755.46 598.06h1.8v1.8h-1.8zM760.03 598.06h1.8v1.8h-1.8zM764.60 598.06h1.8v1.8h-1.8zM769.17 598.06h1.8v1.8h-1.8zM773.74 598.06h1.8v1.8h-1.8zM778.31 598.06h1.8v1.8h-1.8zM782.89 598.06h1.8v1.8h-1.8zM787.46 598.06h1.8v1.8h-1.8z" fill="#000"/>
<text x="48.10" y="50.75" font-size="11" fill="#1b1b1b" font-weight="normal" textLength="47.22" lengthAdjust="spacingAndGlyphs" xml:space="preserve" stroke="#1b1b1b" stroke-width="0.18">AutoSave</text>
<text x="129.70" y="50.80" font-size="11" fill="#3a3a3a" font-weight="normal" textLength="14.74" lengthAdjust="spacingAndGlyphs" xml:space="preserve" stroke="#3a3a3a" stroke-width="0.18">Off</text>
<text x="302.63" y="51.80" font-size="12.4" fill="#1b1b1b" font-weight="normal" textLength="107.67" lengthAdjust="spacingAndGlyphs" xml:space="preserve" stroke="#1b1b1b" stroke-width="0.18">Document2  -  Word</text>
<text x="513.20" y="51.80" font-size="12.4" fill="#5f5f5f" font-weight="normal" textLength="37.99" lengthAdjust="spacingAndGlyphs" xml:space="preserve" stroke="#5f5f5f" stroke-width="0.18">Search</text>
<text x="1016.60" y="90.90" font-size="12.8" fill="#1b1b1b" font-weight="normal" textLength="61.19" lengthAdjust="spacingAndGlyphs" xml:space="preserve" stroke="#1b1b1b" stroke-width="0.18">Comments</text>
<text x="1117.58" y="90.90" font-size="12.8" fill="#1b1b1b" font-weight="normal" textLength="39.73" lengthAdjust="spacingAndGlyphs" xml:space="preserve" stroke="#1b1b1b" stroke-width="0.18">Editing</text>
<text x="1204.00" y="90.90" font-size="12.8" fill="#ffffff" font-weight="normal" textLength="32.81" lengthAdjust="spacingAndGlyphs" xml:space="preserve" stroke="#ffffff" stroke-width="0.18">Share</text>
<text x="21.54" y="90.90" font-size="12.15" fill="#303030" font-weight="normal" textLength="18.72" lengthAdjust="spacingAndGlyphs" xml:space="preserve" stroke="#303030" stroke-width="0.18">File</text>
<text x="66.24" y="90.90" font-size="12.15" fill="#1b1b1b" font-weight="normal" textLength="37.47" lengthAdjust="spacingAndGlyphs" xml:space="preserve" stroke="#1b1b1b" stroke-width="0.45">Home</text>
<text x="122.94" y="90.90" font-size="12.15" fill="#303030" font-weight="normal" textLength="32.30" lengthAdjust="spacingAndGlyphs" xml:space="preserve" stroke="#303030" stroke-width="0.18">Insert</text>
<text x="176.03" y="90.90" font-size="12.15" fill="#303030" font-weight="normal" textLength="30.42" lengthAdjust="spacingAndGlyphs" xml:space="preserve" stroke="#303030" stroke-width="0.18">Draw</text>
<text x="226.21" y="90.90" font-size="12.15" fill="#303030" font-weight="normal" textLength="41.21" lengthAdjust="spacingAndGlyphs" xml:space="preserve" stroke="#303030" stroke-width="0.18">Design</text>
<text x="287.15" y="90.90" font-size="12.15" fill="#303030" font-weight="normal" textLength="38.39" lengthAdjust="spacingAndGlyphs" xml:space="preserve" stroke="#303030" stroke-width="0.18">Layout</text>
<text x="346.36" y="90.90" font-size="12.15" fill="#303030" font-weight="normal" textLength="64.31" lengthAdjust="spacingAndGlyphs" xml:space="preserve" stroke="#303030" stroke-width="0.18">References</text>
<text x="430.19" y="90.90" font-size="12.15" fill="#303030" font-weight="normal" textLength="49.39" lengthAdjust="spacingAndGlyphs" xml:space="preserve" stroke="#303030" stroke-width="0.18">Mailings</text>
<text x="500.49" y="90.90" font-size="12.15" fill="#303030" font-weight="normal" textLength="40.28" lengthAdjust="spacingAndGlyphs" xml:space="preserve" stroke="#303030" stroke-width="0.18">Review</text>
<text x="561.00" y="90.90" font-size="12.15" fill="#303030" font-weight="normal" textLength="26.76" lengthAdjust="spacingAndGlyphs" xml:space="preserve" stroke="#303030" stroke-width="0.18">View</text>
<text x="607.22" y="90.90" font-size="12.15" fill="#303030" font-weight="normal" textLength="26.91" lengthAdjust="spacingAndGlyphs" xml:space="preserve" stroke="#303030" stroke-width="0.18">Help</text>
<text x="27.12" y="156.00" font-size="12.4" fill="#1b1b1b" font-weight="normal" textLength="27.83" lengthAdjust="spacingAndGlyphs" xml:space="preserve" stroke="#1b1b1b" stroke-width="0.18">Paste</text>
<text x="107.30" y="120.60" font-size="11.8" fill="#1b1b1b" font-weight="normal" textLength="67.63" lengthAdjust="spacingAndGlyphs" xml:space="preserve" stroke="#1b1b1b" stroke-width="0.18">Aptos (Body)</text>
<text x="284.50" y="120.60" font-size="11.8" fill="#1b1b1b" font-weight="normal" textLength="10.76" lengthAdjust="spacingAndGlyphs" xml:space="preserve" stroke="#1b1b1b" stroke-width="0.18">12</text>
<text x="20.60" y="194.85" font-size="11.1" fill="#262626" font-weight="normal" textLength="50.08" lengthAdjust="spacingAndGlyphs" xml:space="preserve" stroke="#262626" stroke-width="0.18">Clipboard</text>
<text x="193.80" y="194.85" font-size="11.1" fill="#262626" font-weight="normal" textLength="22.78" lengthAdjust="spacingAndGlyphs" xml:space="preserve" stroke="#262626" stroke-width="0.18">Font</text>
<text x="393.30" y="194.85" font-size="11.1" fill="#262626" font-weight="normal" textLength="52.37" lengthAdjust="spacingAndGlyphs" xml:space="preserve" stroke="#262626" stroke-width="0.18">Paragraph</text>
<text x="687.70" y="194.85" font-size="11.1" fill="#262626" font-weight="normal" textLength="27.39" lengthAdjust="spacingAndGlyphs" xml:space="preserve" stroke="#262626" stroke-width="0.18">Styles</text>
<text x="965.30" y="194.85" font-size="11.1" fill="#262626" font-weight="normal" textLength="26.16" lengthAdjust="spacingAndGlyphs" xml:space="preserve" stroke="#262626" stroke-width="0.18">Voice</text>
<text x="1019.50" y="194.85" font-size="11.1" fill="#262626" font-weight="normal" textLength="49.75" lengthAdjust="spacingAndGlyphs" xml:space="preserve" stroke="#262626" stroke-width="0.18">Sensitivity</text>
<text x="1095.60" y="194.85" font-size="11.1" fill="#262626" font-weight="normal" textLength="29.88" lengthAdjust="spacingAndGlyphs" xml:space="preserve" stroke="#262626" stroke-width="0.18">Editor</text>
<text x="1151.30" y="194.85" font-size="11.1" fill="#262626" font-weight="normal" textLength="38.63" lengthAdjust="spacingAndGlyphs" xml:space="preserve" stroke="#262626" stroke-width="0.18">Add-ins</text>
<text x="562.90" y="148.70" font-size="14.8" fill="#1b1b1b" font-weight="normal" textLength="52.42" lengthAdjust="spacingAndGlyphs" xml:space="preserve" stroke="#1b1b1b" stroke-width="0.18">Normal</text>
<text x="656.97" y="148.70" font-size="14.9" fill="#1b1b1b" font-weight="normal" textLength="79.32" lengthAdjust="spacingAndGlyphs" xml:space="preserve" stroke="#1b1b1b" stroke-width="0.18">No Spacing</text>
<text x="756.67" y="152.50" font-size="24.3" fill="#0f4761" font-weight="normal" textLength="91.87" lengthAdjust="spacingAndGlyphs" xml:space="preserve" stroke="#0f4761" stroke-width="0.18">Heading</text>
<text x="903.60" y="152.90" font-size="11.9" fill="#1b1b1b" font-weight="normal" textLength="36.62" lengthAdjust="spacingAndGlyphs" xml:space="preserve" stroke="#1b1b1b" stroke-width="0.18">Editing</text>
<text x="960.50" y="155.70" font-size="11.8" fill="#1b1b1b" font-weight="normal" textLength="35.97" lengthAdjust="spacingAndGlyphs" xml:space="preserve" stroke="#1b1b1b" stroke-width="0.18">Dictate</text>
<text x="1018.40" y="154.90" font-size="11.8" fill="#ababab" font-weight="normal" textLength="52.00" lengthAdjust="spacingAndGlyphs" xml:space="preserve" stroke="#ababab" stroke-width="0.18">Sensitivity</text>
<text x="1095.60" y="154.90" font-size="11.8" fill="#1b1b1b" font-weight="normal" textLength="30.13" lengthAdjust="spacingAndGlyphs" xml:space="preserve" stroke="#1b1b1b" stroke-width="0.18">Editor</text>
<text x="1150.50" y="154.90" font-size="11.8" fill="#1b1b1b" font-weight="normal" textLength="41.39" lengthAdjust="spacingAndGlyphs" xml:space="preserve" stroke="#1b1b1b" stroke-width="0.18">Add-ins</text>
<text x="11.80" y="874.90" font-size="10.9" fill="#262626" font-weight="normal" textLength="54.76" lengthAdjust="spacingAndGlyphs" xml:space="preserve" stroke="#262626" stroke-width="0.18">Page 1 of 1</text>
<text x="88.00" y="873.80" font-size="11.5" fill="#3c3c3c" font-weight="normal" textLength="39.85" lengthAdjust="spacingAndGlyphs" xml:space="preserve" stroke="#3c3c3c" stroke-width="0.18">0 words</text>
<text x="181.80" y="874.90" font-size="11" fill="#262626" font-weight="normal" textLength="102.12" lengthAdjust="spacingAndGlyphs" xml:space="preserve" stroke="#262626" stroke-width="0.18">Text Predictions: On</text>
<text x="321.80" y="874.90" font-size="11" fill="#262626" font-weight="normal" textLength="125.92" lengthAdjust="spacingAndGlyphs" xml:space="preserve" stroke="#262626" stroke-width="0.18">Accessibility: Good to go</text>
<text x="797.50" y="874.90" font-size="11" fill="#262626" font-weight="normal" textLength="80.19" lengthAdjust="spacingAndGlyphs" xml:space="preserve" stroke="#262626" stroke-width="0.18">Display Settings</text>
<text x="913.30" y="874.90" font-size="11" fill="#262626" font-weight="normal" textLength="28.62" lengthAdjust="spacingAndGlyphs" xml:space="preserve" stroke="#262626" stroke-width="0.18">Focus</text>
<text x="1220.80" y="873.90" font-size="11" fill="#3c3c3c" font-weight="normal" textLength="25.90" lengthAdjust="spacingAndGlyphs" xml:space="preserve" stroke="#3c3c3c" stroke-width="0.18">100%</text>
</svg>
</body></html>
